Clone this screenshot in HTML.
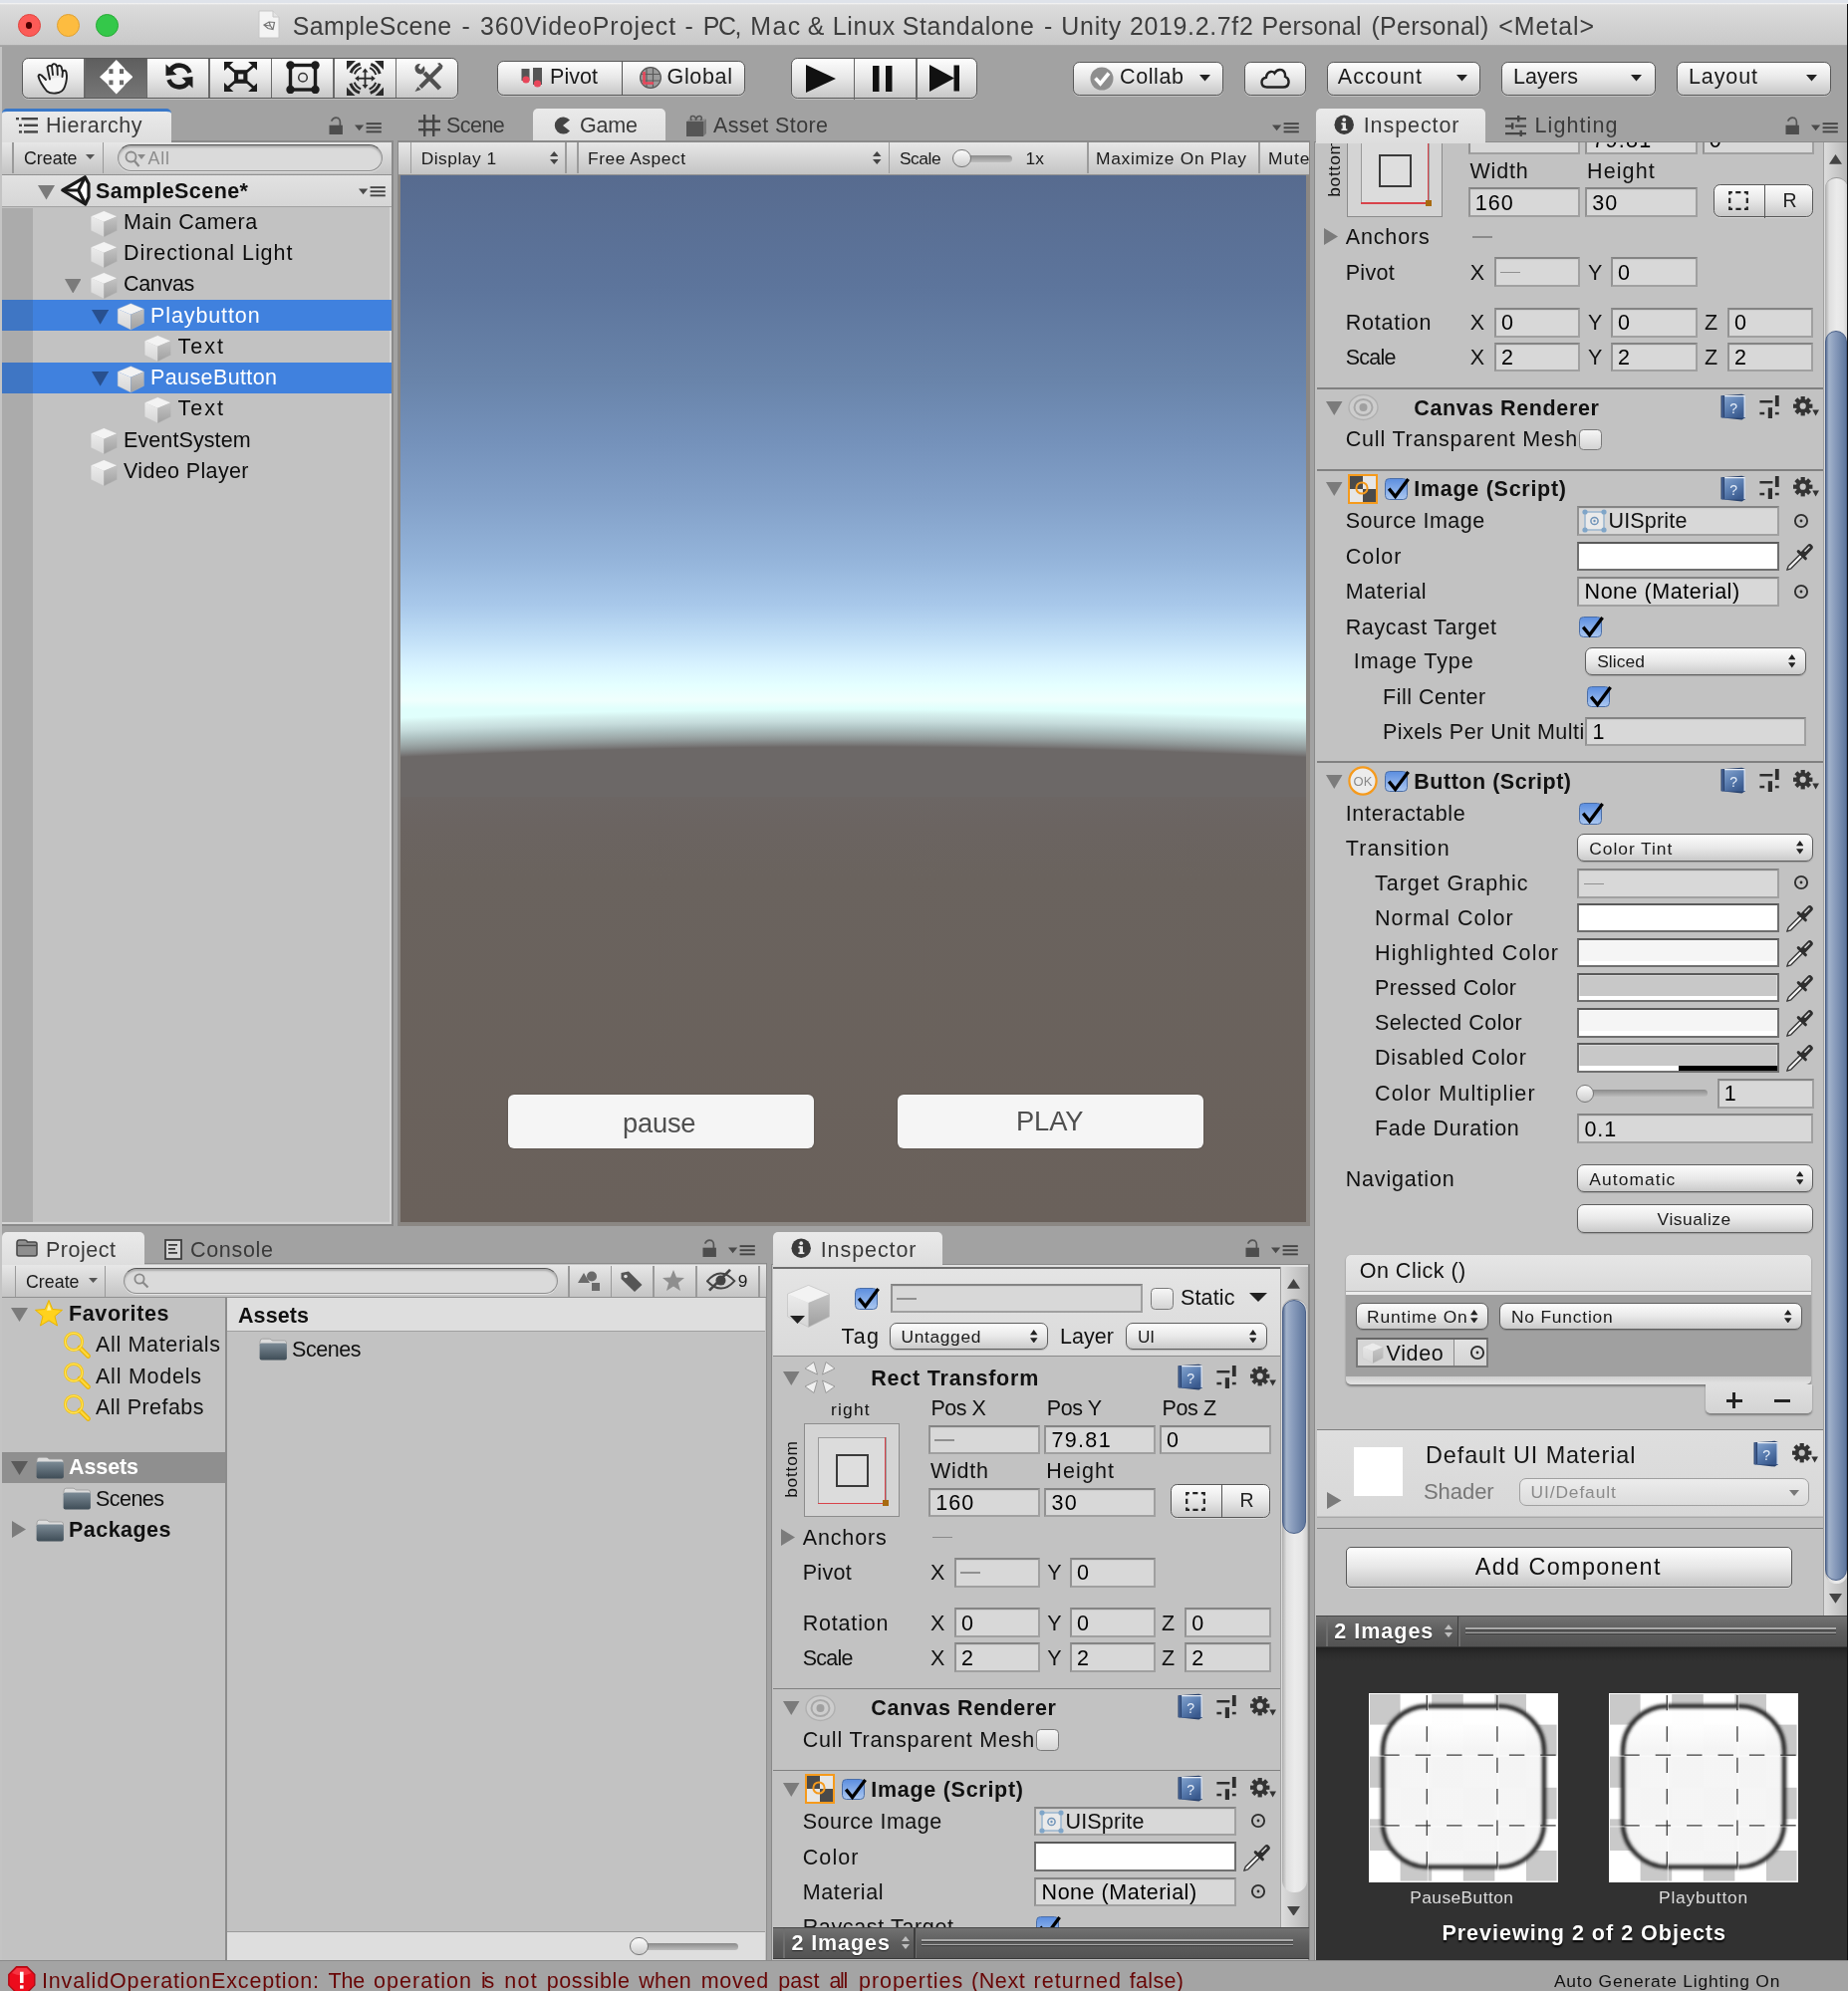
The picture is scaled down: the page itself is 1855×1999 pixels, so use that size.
<!DOCTYPE html>
<html><head><meta charset="utf-8"><title>Unity</title>
<style>

html,body{margin:0;padding:0;}
body{width:1855px;height:1999px;overflow:hidden;background:#a2a2a2;font-family:"Liberation Sans",sans-serif;}
#root{position:relative;width:1855px;height:1999px;overflow:hidden;background:#a2a2a2;opacity:0.9999;}
#root div,#root span,#root svg{position:absolute;box-sizing:border-box;}
.t{white-space:nowrap;line-height:40px;height:40px;}
.btn{background:linear-gradient(#fdfdfd,#e7e7e7 50%,#c7c7c7);border:1.8px solid #585858;border-radius:6.5px;box-shadow:0 1px 0 rgba(255,255,255,.35);}
.pop{background:linear-gradient(#fcfcfc,#e9e9e9 50%,#cacaca);border:1.8px solid #5e5e5e;border-radius:7px;box-shadow:0 1px 1px rgba(0,0,0,.18);}
.fld{background:#d8d8d8;border:2px solid #a0a0a0;border-top-color:#848484;border-left-color:#929292;box-shadow:inset 0 1px 1px rgba(0,0,0,.06);}
.tab{background:linear-gradient(#eaeaea,#dddddd);border-radius:5px 5px 0 0;}
.tbar{background:linear-gradient(#e7e7e7,#c4c4c4);border-bottom:1.5px solid #909090;}
.cb{background:linear-gradient(#f6f6f6,#d4d4d4);border:1.5px solid #7a7a7a;border-radius:4.5px;}
.cbc{background:linear-gradient(#5d8fe0,#a9c6f0);border:1.5px solid #4a6ea8;border-radius:4.5px;}
.sep{background:#808080;}

</style></head><body>
<div id="root">
<div style="left:1319.00px;top:141.50px;width:536.00px;height:1827.00px;background:#c2c2c2;border-left:1.9px solid #8a8a8a;border-top:1.5px solid #8a8a8a;"></div>
<div style="left:1321.50px;top:143.00px;width:508.50px;height:1479.00px;overflow:hidden;"><div style="left:-1321.50px;top:-143.00px;width:1855px;height:1999px;">
<div style="left:1321.00px;top:-32.00px;width:509.00px;height:88.80px;background:linear-gradient(#e4e4e4,#dadada);border-bottom:1.5px solid #8a8a8a;"></div>
<svg style="left:1331.50px;top:-20.00px;opacity:1;" width="49.00" height="49.00" viewBox="0 0 28 28" preserveAspectRatio="none"><defs><linearGradient id="cl" x1="0" y1="0" x2="0" y2="1"><stop offset="0" stop-color="#ececec"/><stop offset="1" stop-color="#d6d6d6"/></linearGradient><linearGradient id="cr" x1="0" y1="0" x2="0" y2="1"><stop offset="0" stop-color="#c4c4c4"/><stop offset="1" stop-color="#a0a0a0"/></linearGradient></defs><polygon points="14,2.5 26,7.5 14,12.5 2,7.5" fill="#f3f3f3"/><polygon points="2,7.5 14,12.5 14,26.5 2,20.5" fill="url(#cl)"/><polygon points="26,7.5 14,12.5 14,26.5 26,20.5" fill="url(#cr)"/><polygon points="14,2.5 26,7.5 26,20.5 14,26.5 2,20.5 2,7.5" fill="none" stroke="#bdbdbd" stroke-width="0.5" stroke-opacity="0.7"/></svg>
<svg style="left:1337.50px;top:15.50px;" width="15.00" height="8.00" viewBox="0 0 10 6" preserveAspectRatio="none"><polygon points="0,0 10,0 5,6" fill="#222"/></svg>
<div class="cbc" style="left:1403.00px;top:-13.00px;width:23.00px;height:22.00px;"></div>
<svg style="left:1403.00px;top:-15.00px;" width="27.00" height="25.00" viewBox="0 0 27 25" preserveAspectRatio="none"><path d="M4.2 12.6 L10.6 20.6 L23.6 3" fill="none" stroke="#000" stroke-width="3.3" stroke-linejoin="miter"/></svg>
<div class="fld" style="left:1438.50px;top:-17.00px;width:253.00px;height:29.80px;"></div>
<div style="left:1445.00px;top:-2.40px;width:20.00px;height:1.60px;background:#909090;"></div>
<div class="cb" style="left:1700.00px;top:-12.50px;width:23.00px;height:22.00px;"></div>
<span class="t" style="left:1730.00px;top:-22.75px;font-size:21.5px;color:#111;letter-spacing:0.144px;">Static</span>
<svg style="left:1798.50px;top:-8.00px;" width="18.00" height="9.00" viewBox="0 0 10 6" preserveAspectRatio="none"><polygon points="0,0 10,0 5,6" fill="#222"/></svg>
<span class="t" style="left:1389.50px;top:16.75px;font-size:21.5px;color:#111;letter-spacing:1.414px;">Tag</span>
<div class="pop" style="left:1437.60px;top:22.20px;width:159.40px;height:27.50px;"></div>
<span class="t" style="left:1449.60px;top:16.45px;font-size:17.4px;color:#1a1a1a;letter-spacing:0.625px;">Untagged</span>
<svg style="left:1579.25px;top:29.20px;" width="7.50" height="13.50" viewBox="0 0 8 14" preserveAspectRatio="none"><polygon points="4,0 8,5.5 0,5.5" fill="#222"/><polygon points="0,8.5 8,8.5 4,14" fill="#222"/></svg>
<span class="t" style="left:1609.00px;top:16.75px;font-size:21.5px;color:#111;letter-spacing:0.051px;">Layer</span>
<div class="pop" style="left:1675.00px;top:22.20px;width:141.50px;height:27.50px;"></div>
<span class="t" style="left:1687.00px;top:16.45px;font-size:17.2px;color:#1a1a1a;letter-spacing:-0.188px;">UI</span>
<svg style="left:1798.75px;top:29.20px;" width="7.50" height="13.50" viewBox="0 0 8 14" preserveAspectRatio="none"><polygon points="4,0 8,5.5 0,5.5" fill="#222"/><polygon points="0,8.5 8,8.5 4,14" fill="#222"/></svg>
<svg style="left:1331.25px;top:71.00px;" width="16.50" height="14.00" viewBox="0 0 10 8" preserveAspectRatio="none"><polygon points="0,0 10,0 5,8" fill="#7b7b7b"/></svg>
<svg style="left:1352.00px;top:61.50px;" width="32.00" height="32.00" viewBox="0 0 32 32" preserveAspectRatio="none"><g fill="#f0f0f0" stroke="#999" stroke-width="1"><polygon points="1,7 10,0.5 13.5,13"/><polygon points="31,7 22,0.5 18.5,13"/><polygon points="1,25 10,31.5 13.5,19"/><polygon points="31,25 22,31.5 18.5,19"/></g></svg>
<span class="t" style="left:1419.30px;top:58.05px;font-size:21.5px;font-weight:bold;color:#111;letter-spacing:0.791px;">Rect Transform</span>
<svg style="left:1727.20px;top:63.40px;" width="26.00" height="27.00" viewBox="0 0 26 27" preserveAspectRatio="none"><defs><linearGradient id="hb" x1="0" y1="0" x2="0.6" y2="1"><stop offset="0" stop-color="#86a5cf"/><stop offset="0.5" stop-color="#5d80b3"/><stop offset="1" stop-color="#3a5a8e"/></linearGradient></defs><path d="M0.5 2.2 L21.5 0.8 L24.8 2 L24.8 24.2 L21.5 26.6 L0.5 24.2 Z" fill="#27406b"/><rect x="4" y="2" width="20.6" height="22.6" fill="url(#hb)"/><path d="M4.3 2.6 H24.2 V24" fill="none" stroke="#e9eef6" stroke-width="1.3"/><path d="M2.2 2.4 V24.4" stroke="#4a6799" stroke-width="1.4"/><text x="13.2" y="19.6" font-family="Liberation Sans" font-size="14" fill="#e4ecf8" text-anchor="middle">?</text></svg>
<svg style="left:1766.30px;top:65.00px;" width="20.00" height="23.00" viewBox="0 0 20 23" preserveAspectRatio="none"><g fill="#2e2e2e"><rect x="0.4" y="5" width="13" height="2.5"/><rect x="15.9" y="0" width="3.8" height="11"/><rect x="0.4" y="16.8" width="4.8" height="2.5"/><rect x="8.8" y="12.2" width="4.2" height="10.8"/><rect x="15.9" y="16.8" width="3.8" height="2.5"/></g></svg>
<svg style="left:1800.00px;top:66.00px;" width="26.00" height="24.00" viewBox="0 0 26 24" preserveAspectRatio="none"><rect x="7.6" y="0" width="4.2" height="19.4" transform="rotate(0 9.7 9.7)" fill="#333"/><rect x="7.6" y="0" width="4.2" height="19.4" transform="rotate(45 9.7 9.7)" fill="#333"/><rect x="7.6" y="0" width="4.2" height="19.4" transform="rotate(90 9.7 9.7)" fill="#333"/><rect x="7.6" y="0" width="4.2" height="19.4" transform="rotate(135 9.7 9.7)" fill="#333"/><circle cx="9.7" cy="9.7" r="6.9" fill="#333"/><circle cx="9.7" cy="9.7" r="3.1" fill="#c6c6c6"/><polygon points="19.3,13.5 26,13.5 22.6,19.5" fill="#333"/></svg>
<span class="t" style="left:1379.00px;top:89.70px;font-size:17.4px;color:#111;letter-spacing:1.214px;">right</span>
<div style="left:1352.40px;top:123.50px;width:95.60px;height:94.20px;background:#d4d4d4;border:1.5px solid #8c8c8c;"></div>
<div style="left:1366.00px;top:137.00px;width:68.50px;height:67.50px;background:#dcdcdc;border:1.5px solid #9a9a9a;"></div>
<div style="left:1383.50px;top:154.50px;width:33.50px;height:33.00px;background:#dedede;border:2px solid #3a3a3a;"></div>
<div style="left:1432.70px;top:137.00px;width:1.80px;height:67.50px;background:#d8434a;"></div>
<div style="left:1366.00px;top:203.00px;width:68.00px;height:1.80px;background:#d8434a;"></div>
<div style="left:1430.50px;top:200.50px;width:6.00px;height:6.00px;background:#a86a10;"></div>
<div style="left:1329.00px;top:131.00px;width:20.00px;height:76.00px;"><span class="t" style="left:-29px;top:18px;width:78px;text-align:center;font-size:17.4px;letter-spacing:0.75px;color:#111;transform:rotate(-90deg);">bottom</span></div>
<span class="t" style="left:1476.00px;top:88.75px;font-size:21.5px;color:#111;letter-spacing:-0.469px;">Pos X</span>
<span class="t" style="left:1593.50px;top:88.75px;font-size:21.5px;color:#111;letter-spacing:-0.421px;">Pos Y</span>
<span class="t" style="left:1711.20px;top:88.75px;font-size:21.5px;color:#111;letter-spacing:-0.389px;">Pos Z</span>
<div class="fld" style="left:1473.50px;top:125.20px;width:112.70px;height:29.80px;"></div>
<div style="left:1480.00px;top:139.80px;width:20.00px;height:1.60px;background:#909090;"></div>
<div class="fld" style="left:1591.00px;top:125.20px;width:112.70px;height:29.80px;"></div>
<span class="t" style="left:1598.30px;top:120.65px;font-size:21.5px;color:#000;letter-spacing:1.297px;">79.81</span>
<div class="fld" style="left:1708.50px;top:125.20px;width:112.00px;height:29.80px;"></div>
<span class="t" style="left:1715.80px;top:120.65px;font-size:21.5px;color:#000;letter-spacing:-0.969px;">0</span>
<span class="t" style="left:1475.50px;top:151.75px;font-size:21.5px;color:#111;letter-spacing:0.783px;">Width</span>
<span class="t" style="left:1593.00px;top:151.75px;font-size:21.5px;color:#111;letter-spacing:1.109px;">Height</span>
<div class="fld" style="left:1473.50px;top:188.20px;width:112.70px;height:29.80px;"></div>
<span class="t" style="left:1480.80px;top:183.65px;font-size:21.5px;color:#000;letter-spacing:1.062px;">160</span>
<div class="fld" style="left:1591.00px;top:188.20px;width:112.70px;height:29.80px;"></div>
<span class="t" style="left:1598.30px;top:183.65px;font-size:21.5px;color:#000;letter-spacing:1.078px;">30</span>
<div class="btn" style="left:1719.70px;top:184.60px;width:100.80px;height:33.70px;"><div style="left:50px;top:0;width:1.5px;height:33px;background:#555;"></div></div>
<svg style="left:1735.00px;top:192.00px;" width="20.00" height="19.00" viewBox="0 0 20 19" preserveAspectRatio="none"><rect x="1.2" y="1.2" width="17.6" height="16.6" fill="none" stroke="#222" stroke-width="2.2" stroke-dasharray="5.2 3.4" stroke-dashoffset="2.6"/></svg>
<span class="t" style="left:1789.60px;top:180.82px;font-size:19.5px;color:#222;">R</span>
<svg style="left:1329.30px;top:229.00px;" width="14.00" height="17.00" viewBox="0 0 8 10" preserveAspectRatio="none"><polygon points="0,0 8,5 0,10" fill="#7b7b7b"/></svg>
<span class="t" style="left:1350.70px;top:218.05px;font-size:21.5px;color:#111;letter-spacing:0.871px;">Anchors</span>
<div style="left:1478.00px;top:237.00px;width:19.60px;height:1.60px;background:#8a8a8a;"></div>
<span class="t" style="left:1350.70px;top:253.75px;font-size:21.5px;color:#111;letter-spacing:0.297px;">Pivot</span>
<span class="t" style="left:1475.70px;top:253.75px;font-size:21.5px;color:#111;letter-spacing:-1.544px;">X</span>
<div class="fld" style="left:1499.70px;top:258.30px;width:86.50px;height:29.80px;"></div>
<div style="left:1506.20px;top:272.90px;width:20.00px;height:1.60px;background:#909090;"></div>
<span class="t" style="left:1594.00px;top:253.75px;font-size:21.5px;color:#111;letter-spacing:-2.344px;">Y</span>
<div class="fld" style="left:1616.60px;top:258.30px;width:87.10px;height:29.80px;"></div>
<span class="t" style="left:1623.90px;top:253.75px;font-size:21.5px;color:#000;letter-spacing:-0.969px;">0</span>
<span class="t" style="left:1350.70px;top:304.25px;font-size:21.5px;color:#111;letter-spacing:0.815px;">Rotation</span>
<span class="t" style="left:1475.70px;top:304.25px;font-size:21.5px;color:#111;letter-spacing:-1.544px;">X</span>
<div class="fld" style="left:1499.70px;top:308.80px;width:86.50px;height:29.80px;"></div>
<span class="t" style="left:1507.00px;top:304.25px;font-size:21.5px;color:#000;letter-spacing:-0.969px;">0</span>
<span class="t" style="left:1594.00px;top:304.25px;font-size:21.5px;color:#111;letter-spacing:-2.344px;">Y</span>
<div class="fld" style="left:1616.60px;top:308.80px;width:87.10px;height:29.80px;"></div>
<span class="t" style="left:1623.90px;top:304.25px;font-size:21.5px;color:#000;letter-spacing:-0.969px;">0</span>
<span class="t" style="left:1711.00px;top:304.25px;font-size:21.5px;color:#111;letter-spacing:-1.841px;">Z</span>
<div class="fld" style="left:1733.70px;top:308.80px;width:86.80px;height:29.80px;"></div>
<span class="t" style="left:1741.00px;top:304.25px;font-size:21.5px;color:#000;letter-spacing:-0.969px;">0</span>
<span class="t" style="left:1350.70px;top:339.05px;font-size:21.5px;color:#111;letter-spacing:-0.749px;">Scale</span>
<span class="t" style="left:1475.70px;top:339.05px;font-size:21.5px;color:#111;letter-spacing:-1.544px;">X</span>
<div class="fld" style="left:1499.70px;top:343.60px;width:86.50px;height:29.80px;"></div>
<span class="t" style="left:1507.00px;top:339.05px;font-size:21.5px;color:#000;letter-spacing:-0.969px;">2</span>
<span class="t" style="left:1594.00px;top:339.05px;font-size:21.5px;color:#111;letter-spacing:-2.344px;">Y</span>
<div class="fld" style="left:1616.60px;top:343.60px;width:87.10px;height:29.80px;"></div>
<span class="t" style="left:1623.90px;top:339.05px;font-size:21.5px;color:#000;letter-spacing:-0.969px;">2</span>
<span class="t" style="left:1711.00px;top:339.05px;font-size:21.5px;color:#111;letter-spacing:-1.841px;">Z</span>
<div class="fld" style="left:1733.70px;top:343.60px;width:86.80px;height:29.80px;"></div>
<span class="t" style="left:1741.00px;top:339.05px;font-size:21.5px;color:#000;letter-spacing:-0.969px;">2</span>
<div class="sep" style="left:1321.00px;top:389.00px;width:509.00px;height:1.60px;"></div>
<svg style="left:1331.25px;top:402.50px;" width="16.50" height="14.00" viewBox="0 0 10 8" preserveAspectRatio="none"><polygon points="0,0 10,0 5,8" fill="#7b7b7b"/></svg>
<svg style="left:1353.00px;top:395.00px;" width="31.00" height="28.00" viewBox="0 0 31 28" preserveAspectRatio="none"><ellipse cx="15.5" cy="14" rx="14.5" ry="12.5" fill="#cdcdcd" stroke="#b0b0b0" stroke-width="1.4"/><ellipse cx="15.5" cy="14" rx="9" ry="8" fill="none" stroke="#a8a8a8" stroke-width="2"/><circle cx="15.5" cy="14" r="4" fill="#a0a0a0"/></svg>
<span class="t" style="left:1419.30px;top:389.55px;font-size:21.5px;font-weight:bold;color:#111;letter-spacing:0.623px;">Canvas Renderer</span>
<svg style="left:1727.20px;top:394.90px;" width="26.00" height="27.00" viewBox="0 0 26 27" preserveAspectRatio="none"><defs><linearGradient id="hb" x1="0" y1="0" x2="0.6" y2="1"><stop offset="0" stop-color="#86a5cf"/><stop offset="0.5" stop-color="#5d80b3"/><stop offset="1" stop-color="#3a5a8e"/></linearGradient></defs><path d="M0.5 2.2 L21.5 0.8 L24.8 2 L24.8 24.2 L21.5 26.6 L0.5 24.2 Z" fill="#27406b"/><rect x="4" y="2" width="20.6" height="22.6" fill="url(#hb)"/><path d="M4.3 2.6 H24.2 V24" fill="none" stroke="#e9eef6" stroke-width="1.3"/><path d="M2.2 2.4 V24.4" stroke="#4a6799" stroke-width="1.4"/><text x="13.2" y="19.6" font-family="Liberation Sans" font-size="14" fill="#e4ecf8" text-anchor="middle">?</text></svg>
<svg style="left:1766.30px;top:396.50px;" width="20.00" height="23.00" viewBox="0 0 20 23" preserveAspectRatio="none"><g fill="#2e2e2e"><rect x="0.4" y="5" width="13" height="2.5"/><rect x="15.9" y="0" width="3.8" height="11"/><rect x="0.4" y="16.8" width="4.8" height="2.5"/><rect x="8.8" y="12.2" width="4.2" height="10.8"/><rect x="15.9" y="16.8" width="3.8" height="2.5"/></g></svg>
<svg style="left:1800.00px;top:397.50px;" width="26.00" height="24.00" viewBox="0 0 26 24" preserveAspectRatio="none"><rect x="7.6" y="0" width="4.2" height="19.4" transform="rotate(0 9.7 9.7)" fill="#333"/><rect x="7.6" y="0" width="4.2" height="19.4" transform="rotate(45 9.7 9.7)" fill="#333"/><rect x="7.6" y="0" width="4.2" height="19.4" transform="rotate(90 9.7 9.7)" fill="#333"/><rect x="7.6" y="0" width="4.2" height="19.4" transform="rotate(135 9.7 9.7)" fill="#333"/><circle cx="9.7" cy="9.7" r="6.9" fill="#333"/><circle cx="9.7" cy="9.7" r="3.1" fill="#c6c6c6"/><polygon points="19.3,13.5 26,13.5 22.6,19.5" fill="#333"/></svg>
<span class="t" style="left:1350.70px;top:421.15px;font-size:21.5px;color:#111;letter-spacing:0.815px;">Cull Transparent Mesh</span>
<div class="cb" style="left:1585.30px;top:430.50px;width:22.50px;height:21.50px;"></div>
<div class="sep" style="left:1321.00px;top:471.00px;width:509.00px;height:1.60px;"></div>
<svg style="left:1331.25px;top:484.20px;" width="16.50" height="14.00" viewBox="0 0 10 8" preserveAspectRatio="none"><polygon points="0,0 10,0 5,8" fill="#7b7b7b"/></svg>
<svg style="left:1353.00px;top:475.70px;" width="30.00" height="30.00" viewBox="0 0 30 30" preserveAspectRatio="none"><rect x="1" y="1" width="28" height="28" fill="#e6e6e6"/><rect x="1" y="1" width="14" height="14" fill="#4a4a4a"/><rect x="15" y="15" width="14" height="14" fill="#4a4a4a"/><rect x="1" y="1" width="28" height="28" fill="none" stroke="#f59a1c" stroke-width="2"/><circle cx="14" cy="14" r="5.6" fill="none" stroke="#f59a1c" stroke-width="2"/></svg>
<div class="cbc" style="left:1389.70px;top:480.00px;width:23.00px;height:21.50px;"></div>
<svg style="left:1389.70px;top:478.00px;" width="27.00" height="25.00" viewBox="0 0 27 25" preserveAspectRatio="none"><path d="M4.2 12.6 L10.6 20.6 L23.6 3" fill="none" stroke="#000" stroke-width="3.3" stroke-linejoin="miter"/></svg>
<span class="t" style="left:1419.30px;top:471.25px;font-size:21.5px;font-weight:bold;color:#111;letter-spacing:0.717px;">Image (Script)</span>
<svg style="left:1727.20px;top:476.60px;" width="26.00" height="27.00" viewBox="0 0 26 27" preserveAspectRatio="none"><defs><linearGradient id="hb" x1="0" y1="0" x2="0.6" y2="1"><stop offset="0" stop-color="#86a5cf"/><stop offset="0.5" stop-color="#5d80b3"/><stop offset="1" stop-color="#3a5a8e"/></linearGradient></defs><path d="M0.5 2.2 L21.5 0.8 L24.8 2 L24.8 24.2 L21.5 26.6 L0.5 24.2 Z" fill="#27406b"/><rect x="4" y="2" width="20.6" height="22.6" fill="url(#hb)"/><path d="M4.3 2.6 H24.2 V24" fill="none" stroke="#e9eef6" stroke-width="1.3"/><path d="M2.2 2.4 V24.4" stroke="#4a6799" stroke-width="1.4"/><text x="13.2" y="19.6" font-family="Liberation Sans" font-size="14" fill="#e4ecf8" text-anchor="middle">?</text></svg>
<svg style="left:1766.30px;top:478.20px;" width="20.00" height="23.00" viewBox="0 0 20 23" preserveAspectRatio="none"><g fill="#2e2e2e"><rect x="0.4" y="5" width="13" height="2.5"/><rect x="15.9" y="0" width="3.8" height="11"/><rect x="0.4" y="16.8" width="4.8" height="2.5"/><rect x="8.8" y="12.2" width="4.2" height="10.8"/><rect x="15.9" y="16.8" width="3.8" height="2.5"/></g></svg>
<svg style="left:1800.00px;top:479.20px;" width="26.00" height="24.00" viewBox="0 0 26 24" preserveAspectRatio="none"><rect x="7.6" y="0" width="4.2" height="19.4" transform="rotate(0 9.7 9.7)" fill="#333"/><rect x="7.6" y="0" width="4.2" height="19.4" transform="rotate(45 9.7 9.7)" fill="#333"/><rect x="7.6" y="0" width="4.2" height="19.4" transform="rotate(90 9.7 9.7)" fill="#333"/><rect x="7.6" y="0" width="4.2" height="19.4" transform="rotate(135 9.7 9.7)" fill="#333"/><circle cx="9.7" cy="9.7" r="6.9" fill="#333"/><circle cx="9.7" cy="9.7" r="3.1" fill="#c6c6c6"/><polygon points="19.3,13.5 26,13.5 22.6,19.5" fill="#333"/></svg>
<span class="t" style="left:1350.70px;top:503.25px;font-size:21.5px;color:#111;letter-spacing:0.522px;">Source Image</span>
<div class="fld" style="left:1583.30px;top:508.20px;width:202.70px;height:29.80px;"></div>
<svg style="left:1588.00px;top:511.00px;" width="25.00" height="24.00" viewBox="0 0 25 24" preserveAspectRatio="none"><rect x="3" y="3" width="19" height="18" fill="#eaeaea" stroke="#9fb8d0" stroke-width="1.6"/><g fill="#7fa5c8"><circle cx="3" cy="3" r="2.6"/><circle cx="22" cy="3" r="2.6"/><circle cx="3" cy="21" r="2.6"/><circle cx="22" cy="21" r="2.6"/></g><circle cx="12.5" cy="12" r="3.6" fill="none" stroke="#6f93b8" stroke-width="1.5"/><circle cx="12.5" cy="12" r="1.2" fill="#6f93b8"/></svg>
<span class="t" style="left:1614.50px;top:503.25px;font-size:21.5px;color:#111;letter-spacing:0.175px;">UISprite</span>
<svg style="left:1800.40px;top:514.80px;" width="16.00" height="16.00" viewBox="0 0 16 16" preserveAspectRatio="none"><circle cx="8" cy="8" r="6.1" fill="none" stroke="#2e2e2e" stroke-width="1.9"/><circle cx="8" cy="8" r="1.4" fill="#2e2e2e"/></svg>
<span class="t" style="left:1350.70px;top:539.05px;font-size:21.5px;color:#111;letter-spacing:1.102px;">Color</span>
<div style="left:1583.30px;top:543.60px;width:202.70px;height:29.80px;background:#fff;border:2px solid #6f6f6f;border-top-color:#5a5a5a;box-shadow:inset 0 0 0 1px rgba(255,255,255,.35);"></div>
<div style="left:1585.30px;top:567.00px;width:198.70px;height:4.40px;background:#fff;"></div>
<svg style="left:1792.50px;top:545.00px;" width="27.00" height="28.00" viewBox="0 0 27 28" preserveAspectRatio="none"><path d="M0.8 27.2 L2.2 23.2 L14.2 11.2 L16.8 13.8 L4.8 25.8 Z" fill="#f4f4f4" stroke="#3a3a3a" stroke-width="1.4" stroke-linejoin="round"/><path d="M12.2 8.6 L19.4 15.8" stroke="#2e2e2e" stroke-width="3" stroke-linecap="round"/><path d="M17.4 10.8 L23.6 4.4" stroke="#2e2e2e" stroke-width="6.2" stroke-linecap="round"/><path d="M19 8.2 L23 4.2" stroke="#d8d8d8" stroke-width="1.6" stroke-linecap="round"/></svg>
<span class="t" style="left:1350.70px;top:574.05px;font-size:21.5px;color:#111;letter-spacing:0.619px;">Material</span>
<div class="fld" style="left:1583.30px;top:579.00px;width:202.70px;height:29.80px;"></div>
<span class="t" style="left:1590.60px;top:574.45px;font-size:21.5px;color:#000;letter-spacing:0.523px;">None (Material)</span>
<svg style="left:1800.40px;top:585.50px;" width="16.00" height="16.00" viewBox="0 0 16 16" preserveAspectRatio="none"><circle cx="8" cy="8" r="6.1" fill="none" stroke="#2e2e2e" stroke-width="1.9"/><circle cx="8" cy="8" r="1.4" fill="#2e2e2e"/></svg>
<span class="t" style="left:1350.70px;top:609.55px;font-size:21.5px;color:#111;letter-spacing:0.637px;">Raycast Target</span>
<div class="cbc" style="left:1585.30px;top:618.50px;width:22.50px;height:21.50px;"></div>
<svg style="left:1585.30px;top:616.50px;" width="27.00" height="25.00" viewBox="0 0 27 25" preserveAspectRatio="none"><path d="M4.2 12.6 L10.6 20.6 L23.6 3" fill="none" stroke="#000" stroke-width="3.3" stroke-linejoin="miter"/></svg>
<span class="t" style="left:1358.80px;top:644.25px;font-size:21.5px;color:#111;letter-spacing:0.872px;">Image Type</span>
<div class="pop" style="left:1591.20px;top:650.00px;width:221.50px;height:27.50px;"></div>
<span class="t" style="left:1603.20px;top:644.25px;font-size:17.4px;color:#1a1a1a;letter-spacing:0.065px;">Sliced</span>
<svg style="left:1794.95px;top:657.00px;" width="7.50" height="13.50" viewBox="0 0 8 14" preserveAspectRatio="none"><polygon points="4,0 8,5.5 0,5.5" fill="#222"/><polygon points="0,8.5 8,8.5 4,14" fill="#222"/></svg>
<span class="t" style="left:1388.00px;top:679.55px;font-size:21.5px;color:#111;letter-spacing:0.523px;">Fill Center</span>
<div class="cbc" style="left:1593.20px;top:688.50px;width:22.50px;height:21.50px;"></div>
<svg style="left:1593.20px;top:686.50px;" width="27.00" height="25.00" viewBox="0 0 27 25" preserveAspectRatio="none"><path d="M4.2 12.6 L10.6 20.6 L23.6 3" fill="none" stroke="#000" stroke-width="3.3" stroke-linejoin="miter"/></svg>
<span class="t" style="left:1388.00px;top:714.55px;font-size:21.5px;color:#111;letter-spacing:0.497px;">Pixels Per Unit Multi</span>
<div class="fld" style="left:1591.20px;top:719.60px;width:221.50px;height:29.80px;"></div>
<span class="t" style="left:1598.50px;top:715.05px;font-size:21.5px;color:#000;letter-spacing:-1.969px;">1</span>
<div class="sep" style="left:1321.00px;top:764.30px;width:509.00px;height:1.60px;"></div>
<svg style="left:1331.25px;top:777.90px;" width="16.50" height="14.00" viewBox="0 0 10 8" preserveAspectRatio="none"><polygon points="0,0 10,0 5,8" fill="#7b7b7b"/></svg>
<svg style="left:1353.00px;top:769.40px;" width="30.00" height="30.00" viewBox="0 0 30 30" preserveAspectRatio="none"><circle cx="15" cy="15" r="13.6" fill="#ececec" stroke="#f59a1c" stroke-width="2.2"/><text x="15" y="20" font-family="Liberation Sans" font-size="13" fill="#8a8a8a" text-anchor="middle">OK</text></svg>
<div class="cbc" style="left:1389.70px;top:773.70px;width:23.00px;height:21.50px;"></div>
<svg style="left:1389.70px;top:771.70px;" width="27.00" height="25.00" viewBox="0 0 27 25" preserveAspectRatio="none"><path d="M4.2 12.6 L10.6 20.6 L23.6 3" fill="none" stroke="#000" stroke-width="3.3" stroke-linejoin="miter"/></svg>
<span class="t" style="left:1419.30px;top:764.95px;font-size:21.5px;font-weight:bold;color:#111;letter-spacing:0.517px;">Button (Script)</span>
<svg style="left:1727.20px;top:770.30px;" width="26.00" height="27.00" viewBox="0 0 26 27" preserveAspectRatio="none"><defs><linearGradient id="hb" x1="0" y1="0" x2="0.6" y2="1"><stop offset="0" stop-color="#86a5cf"/><stop offset="0.5" stop-color="#5d80b3"/><stop offset="1" stop-color="#3a5a8e"/></linearGradient></defs><path d="M0.5 2.2 L21.5 0.8 L24.8 2 L24.8 24.2 L21.5 26.6 L0.5 24.2 Z" fill="#27406b"/><rect x="4" y="2" width="20.6" height="22.6" fill="url(#hb)"/><path d="M4.3 2.6 H24.2 V24" fill="none" stroke="#e9eef6" stroke-width="1.3"/><path d="M2.2 2.4 V24.4" stroke="#4a6799" stroke-width="1.4"/><text x="13.2" y="19.6" font-family="Liberation Sans" font-size="14" fill="#e4ecf8" text-anchor="middle">?</text></svg>
<svg style="left:1766.30px;top:771.90px;" width="20.00" height="23.00" viewBox="0 0 20 23" preserveAspectRatio="none"><g fill="#2e2e2e"><rect x="0.4" y="5" width="13" height="2.5"/><rect x="15.9" y="0" width="3.8" height="11"/><rect x="0.4" y="16.8" width="4.8" height="2.5"/><rect x="8.8" y="12.2" width="4.2" height="10.8"/><rect x="15.9" y="16.8" width="3.8" height="2.5"/></g></svg>
<svg style="left:1800.00px;top:772.90px;" width="26.00" height="24.00" viewBox="0 0 26 24" preserveAspectRatio="none"><rect x="7.6" y="0" width="4.2" height="19.4" transform="rotate(0 9.7 9.7)" fill="#333"/><rect x="7.6" y="0" width="4.2" height="19.4" transform="rotate(45 9.7 9.7)" fill="#333"/><rect x="7.6" y="0" width="4.2" height="19.4" transform="rotate(90 9.7 9.7)" fill="#333"/><rect x="7.6" y="0" width="4.2" height="19.4" transform="rotate(135 9.7 9.7)" fill="#333"/><circle cx="9.7" cy="9.7" r="6.9" fill="#333"/><circle cx="9.7" cy="9.7" r="3.1" fill="#c6c6c6"/><polygon points="19.3,13.5 26,13.5 22.6,19.5" fill="#333"/></svg>
<span class="t" style="left:1350.70px;top:796.85px;font-size:21.5px;color:#111;letter-spacing:0.704px;">Interactable</span>
<div class="cbc" style="left:1585.30px;top:806.00px;width:22.50px;height:21.50px;"></div>
<svg style="left:1585.30px;top:804.00px;" width="27.00" height="25.00" viewBox="0 0 27 25" preserveAspectRatio="none"><path d="M4.2 12.6 L10.6 20.6 L23.6 3" fill="none" stroke="#000" stroke-width="3.3" stroke-linejoin="miter"/></svg>
<span class="t" style="left:1350.70px;top:831.95px;font-size:21.5px;color:#111;letter-spacing:1.155px;">Transition</span>
<div class="pop" style="left:1583.30px;top:837.30px;width:237.20px;height:27.50px;"></div>
<span class="t" style="left:1595.30px;top:831.55px;font-size:17.4px;color:#1a1a1a;letter-spacing:0.953px;">Color Tint</span>
<svg style="left:1802.75px;top:844.30px;" width="7.50" height="13.50" viewBox="0 0 8 14" preserveAspectRatio="none"><polygon points="4,0 8,5.5 0,5.5" fill="#222"/><polygon points="0,8.5 8,8.5 4,14" fill="#222"/></svg>
<span class="t" style="left:1380.00px;top:866.95px;font-size:21.5px;color:#111;letter-spacing:0.968px;">Target Graphic</span>
<div class="fld" style="left:1583.30px;top:872.20px;width:202.70px;height:29.80px;"></div>
<div style="left:1589.80px;top:886.80px;width:20.00px;height:1.60px;background:#909090;"></div>
<svg style="left:1800.40px;top:878.40px;" width="16.00" height="16.00" viewBox="0 0 16 16" preserveAspectRatio="none"><circle cx="8" cy="8" r="6.1" fill="none" stroke="#2e2e2e" stroke-width="1.9"/><circle cx="8" cy="8" r="1.4" fill="#2e2e2e"/></svg>
<span class="t" style="left:1380.00px;top:902.05px;font-size:21.5px;color:#111;letter-spacing:1.096px;">Normal Color</span>
<div style="left:1583.30px;top:906.60px;width:202.70px;height:29.80px;background:#fff;border:2px solid #6f6f6f;border-top-color:#5a5a5a;box-shadow:inset 0 0 0 1px rgba(255,255,255,.35);"></div>
<div style="left:1585.30px;top:930.00px;width:198.70px;height:4.40px;background:#fff;"></div>
<svg style="left:1792.50px;top:908.00px;" width="27.00" height="28.00" viewBox="0 0 27 28" preserveAspectRatio="none"><path d="M0.8 27.2 L2.2 23.2 L14.2 11.2 L16.8 13.8 L4.8 25.8 Z" fill="#f4f4f4" stroke="#3a3a3a" stroke-width="1.4" stroke-linejoin="round"/><path d="M12.2 8.6 L19.4 15.8" stroke="#2e2e2e" stroke-width="3" stroke-linecap="round"/><path d="M17.4 10.8 L23.6 4.4" stroke="#2e2e2e" stroke-width="6.2" stroke-linecap="round"/><path d="M19 8.2 L23 4.2" stroke="#d8d8d8" stroke-width="1.6" stroke-linecap="round"/></svg>
<span class="t" style="left:1380.00px;top:937.15px;font-size:21.5px;color:#111;letter-spacing:1.191px;">Highlighted Color</span>
<div style="left:1583.30px;top:941.70px;width:202.70px;height:29.80px;background:#f5f5f5;border:2px solid #6f6f6f;border-top-color:#5a5a5a;box-shadow:inset 0 0 0 1px rgba(255,255,255,.35);"></div>
<div style="left:1585.30px;top:965.10px;width:198.70px;height:4.40px;background:#fff;"></div>
<svg style="left:1792.50px;top:943.10px;" width="27.00" height="28.00" viewBox="0 0 27 28" preserveAspectRatio="none"><path d="M0.8 27.2 L2.2 23.2 L14.2 11.2 L16.8 13.8 L4.8 25.8 Z" fill="#f4f4f4" stroke="#3a3a3a" stroke-width="1.4" stroke-linejoin="round"/><path d="M12.2 8.6 L19.4 15.8" stroke="#2e2e2e" stroke-width="3" stroke-linecap="round"/><path d="M17.4 10.8 L23.6 4.4" stroke="#2e2e2e" stroke-width="6.2" stroke-linecap="round"/><path d="M19 8.2 L23 4.2" stroke="#d8d8d8" stroke-width="1.6" stroke-linecap="round"/></svg>
<span class="t" style="left:1380.00px;top:972.15px;font-size:21.5px;color:#111;letter-spacing:0.480px;">Pressed Color</span>
<div style="left:1583.30px;top:976.70px;width:202.70px;height:29.80px;background:#c8c8c8;border:2px solid #6f6f6f;border-top-color:#5a5a5a;box-shadow:inset 0 0 0 1px rgba(255,255,255,.35);"></div>
<div style="left:1585.30px;top:1000.10px;width:198.70px;height:4.40px;background:#fff;"></div>
<svg style="left:1792.50px;top:978.10px;" width="27.00" height="28.00" viewBox="0 0 27 28" preserveAspectRatio="none"><path d="M0.8 27.2 L2.2 23.2 L14.2 11.2 L16.8 13.8 L4.8 25.8 Z" fill="#f4f4f4" stroke="#3a3a3a" stroke-width="1.4" stroke-linejoin="round"/><path d="M12.2 8.6 L19.4 15.8" stroke="#2e2e2e" stroke-width="3" stroke-linecap="round"/><path d="M17.4 10.8 L23.6 4.4" stroke="#2e2e2e" stroke-width="6.2" stroke-linecap="round"/><path d="M19 8.2 L23 4.2" stroke="#d8d8d8" stroke-width="1.6" stroke-linecap="round"/></svg>
<span class="t" style="left:1380.00px;top:1007.25px;font-size:21.5px;color:#111;letter-spacing:0.513px;">Selected Color</span>
<div style="left:1583.30px;top:1011.80px;width:202.70px;height:29.80px;background:#f5f5f5;border:2px solid #6f6f6f;border-top-color:#5a5a5a;box-shadow:inset 0 0 0 1px rgba(255,255,255,.35);"></div>
<div style="left:1585.30px;top:1035.20px;width:198.70px;height:4.40px;background:#fff;"></div>
<svg style="left:1792.50px;top:1013.20px;" width="27.00" height="28.00" viewBox="0 0 27 28" preserveAspectRatio="none"><path d="M0.8 27.2 L2.2 23.2 L14.2 11.2 L16.8 13.8 L4.8 25.8 Z" fill="#f4f4f4" stroke="#3a3a3a" stroke-width="1.4" stroke-linejoin="round"/><path d="M12.2 8.6 L19.4 15.8" stroke="#2e2e2e" stroke-width="3" stroke-linecap="round"/><path d="M17.4 10.8 L23.6 4.4" stroke="#2e2e2e" stroke-width="6.2" stroke-linecap="round"/><path d="M19 8.2 L23 4.2" stroke="#d8d8d8" stroke-width="1.6" stroke-linecap="round"/></svg>
<span class="t" style="left:1380.00px;top:1042.35px;font-size:21.5px;color:#111;letter-spacing:0.830px;">Disabled Color</span>
<div style="left:1583.30px;top:1046.90px;width:202.70px;height:29.80px;background:#c8c8c8;border:2px solid #6f6f6f;border-top-color:#5a5a5a;box-shadow:inset 0 0 0 1px rgba(255,255,255,.35);"></div>
<div style="left:1585.30px;top:1070.30px;width:99.35px;height:4.40px;background:#fff;"></div>
<div style="left:1684.65px;top:1070.30px;width:99.35px;height:4.40px;background:#000;"></div>
<svg style="left:1792.50px;top:1048.30px;" width="27.00" height="28.00" viewBox="0 0 27 28" preserveAspectRatio="none"><path d="M0.8 27.2 L2.2 23.2 L14.2 11.2 L16.8 13.8 L4.8 25.8 Z" fill="#f4f4f4" stroke="#3a3a3a" stroke-width="1.4" stroke-linejoin="round"/><path d="M12.2 8.6 L19.4 15.8" stroke="#2e2e2e" stroke-width="3" stroke-linecap="round"/><path d="M17.4 10.8 L23.6 4.4" stroke="#2e2e2e" stroke-width="6.2" stroke-linecap="round"/><path d="M19 8.2 L23 4.2" stroke="#d8d8d8" stroke-width="1.6" stroke-linecap="round"/></svg>
<span class="t" style="left:1380.00px;top:1077.95px;font-size:21.5px;color:#111;letter-spacing:1.148px;">Color Multiplier</span>
<div style="left:1590.00px;top:1094.00px;width:124.00px;height:7.00px;background:linear-gradient(#8a8a8a,#bcbcbc);border-radius:4px;"></div>
<div style="left:1581.50px;top:1088.50px;width:18.00px;height:18.00px;background:linear-gradient(#fbfbfb,#cdcdcd);border:1.5px solid #777;border-radius:50%;"></div>
<div class="fld" style="left:1723.50px;top:1083.00px;width:97.00px;height:29.80px;"></div>
<span class="t" style="left:1730.80px;top:1078.45px;font-size:21.5px;color:#000;letter-spacing:-1.969px;">1</span>
<span class="t" style="left:1380.00px;top:1113.05px;font-size:21.5px;color:#111;letter-spacing:0.712px;">Fade Duration</span>
<div class="fld" style="left:1583.30px;top:1118.20px;width:237.20px;height:29.80px;"></div>
<span class="t" style="left:1590.60px;top:1113.65px;font-size:21.5px;color:#000;letter-spacing:0.805px;">0.1</span>
<span class="t" style="left:1350.70px;top:1163.75px;font-size:21.5px;color:#111;letter-spacing:0.823px;">Navigation</span>
<div class="pop" style="left:1583.30px;top:1169.30px;width:237.20px;height:27.50px;"></div>
<span class="t" style="left:1595.30px;top:1163.55px;font-size:17.4px;color:#1a1a1a;letter-spacing:1.084px;">Automatic</span>
<svg style="left:1802.75px;top:1176.30px;" width="7.50" height="13.50" viewBox="0 0 8 14" preserveAspectRatio="none"><polygon points="4,0 8,5.5 0,5.5" fill="#222"/><polygon points="0,8.5 8,8.5 4,14" fill="#222"/></svg>
<div class="pop" style="left:1583.30px;top:1208.70px;width:237.20px;height:29.20px;"></div>
<span class="t" style="left:1663.60px;top:1203.70px;font-size:17.4px;color:#1a1a1a;letter-spacing:0.550px;">Visualize</span>
<div style="left:1350.70px;top:1259.80px;width:467.80px;height:130.00px;background:#a0a0a0;border-radius:5px;box-shadow:0 1.5px 2px rgba(0,0,0,.35);"></div>
<div style="left:1350.70px;top:1259.80px;width:467.80px;height:36.50px;background:linear-gradient(#e6e6e6,#dadada);border-radius:5px 5px 0 0;"></div>
<div style="left:1350.70px;top:1295.80px;width:467.80px;height:1.20px;background:#a6a6a6;"></div>
<div style="left:1350.70px;top:1297.00px;width:467.80px;height:3.30px;background:#ececec;"></div>
<div style="left:1350.70px;top:1382.00px;width:467.80px;height:8.00px;background:linear-gradient(#cfcfcf,#e4e4e4);border-radius:0 0 5px 5px;"></div>
<span class="t" style="left:1364.70px;top:1256.45px;font-size:21.5px;color:#111;letter-spacing:0.507px;">On Click ()</span>
<div class="pop" style="left:1360.90px;top:1308.00px;width:133.10px;height:27.20px;"></div>
<span class="t" style="left:1372.00px;top:1302.10px;font-size:17.4px;color:#1a1a1a;letter-spacing:0.889px;">Runtime On</span>
<svg style="left:1476.25px;top:1314.85px;" width="7.50" height="13.50" viewBox="0 0 8 14" preserveAspectRatio="none"><polygon points="4,0 8,5.5 0,5.5" fill="#222"/><polygon points="0,8.5 8,8.5 4,14" fill="#222"/></svg>
<div class="pop" style="left:1505.00px;top:1308.00px;width:303.90px;height:27.20px;"></div>
<span class="t" style="left:1517.00px;top:1302.10px;font-size:17.4px;color:#1a1a1a;letter-spacing:0.793px;">No Function</span>
<svg style="left:1791.15px;top:1314.85px;" width="7.50" height="13.50" viewBox="0 0 8 14" preserveAspectRatio="none"><polygon points="4,0 8,5.5 0,5.5" fill="#222"/><polygon points="0,8.5 8,8.5 4,14" fill="#222"/></svg>
<div style="left:1360.90px;top:1343.00px;width:133.10px;height:30.40px;background:#d6d6d6;border:2px solid #787878;border-top-color:#666;"></div>
<div style="left:1458.80px;top:1345.00px;width:33.20px;height:26.40px;background:linear-gradient(#e2e2e2,#d4d4d4);border-left:1.5px solid #8c8c8c;"></div>
<svg style="left:1365.50px;top:1346.00px;opacity:0.75;" width="24.00" height="24.00" viewBox="0 0 28 28" preserveAspectRatio="none"><defs><linearGradient id="cl" x1="0" y1="0" x2="0" y2="1"><stop offset="0" stop-color="#ececec"/><stop offset="1" stop-color="#d6d6d6"/></linearGradient><linearGradient id="cr" x1="0" y1="0" x2="0" y2="1"><stop offset="0" stop-color="#c4c4c4"/><stop offset="1" stop-color="#a0a0a0"/></linearGradient></defs><polygon points="14,2.5 26,7.5 14,12.5 2,7.5" fill="#f3f3f3"/><polygon points="2,7.5 14,12.5 14,26.5 2,20.5" fill="url(#cl)"/><polygon points="26,7.5 14,12.5 14,26.5 26,20.5" fill="url(#cr)"/><polygon points="14,2.5 26,7.5 26,20.5 14,26.5 2,20.5 2,7.5" fill="none" stroke="#bdbdbd" stroke-width="0.5" stroke-opacity="0.7"/></svg>
<span class="t" style="left:1391.60px;top:1338.55px;font-size:21.5px;color:#111;letter-spacing:0.648px;">Video</span>
<svg style="left:1474.90px;top:1349.50px;" width="16.00" height="16.00" viewBox="0 0 16 16" preserveAspectRatio="none"><circle cx="8" cy="8" r="6.1" fill="none" stroke="#2e2e2e" stroke-width="1.9"/><circle cx="8" cy="8" r="1.4" fill="#2e2e2e"/></svg>
<div style="left:1711.50px;top:1389.90px;width:107.00px;height:29.50px;background:linear-gradient(#e0e0e0,#d4d4d4);border-radius:0 0 5px 5px;box-shadow:0 1.5px 2px rgba(0,0,0,.35);"></div>
<div style="left:1732.50px;top:1404.60px;width:16.00px;height:3.00px;background:#222;"></div>
<div style="left:1739.00px;top:1398.00px;width:3.00px;height:16.00px;background:#222;"></div>
<div style="left:1781.00px;top:1404.60px;width:16.00px;height:3.00px;background:#222;"></div>
<div class="sep" style="left:1321.00px;top:1434.50px;width:509.00px;height:1.60px;"></div>
<div style="left:1321.00px;top:1436.20px;width:509.00px;height:86.30px;background:linear-gradient(#dedede,#d8d8d8);"></div>
<div style="left:1321.00px;top:1522.50px;width:509.00px;height:1.50px;background:#a8a8a8;"></div>
<div style="left:1359.40px;top:1453.00px;width:48.60px;height:48.60px;background:#fff;"></div>
<svg style="left:1332.25px;top:1497.50px;" width="14.50" height="17.00" viewBox="0 0 8 10" preserveAspectRatio="none"><polygon points="0,0 8,5 0,10" fill="#7b7b7b"/></svg>
<span class="t" style="left:1431.00px;top:1440.87px;font-size:23.4px;color:#161616;letter-spacing:0.928px;">Default UI Material</span>
<svg style="left:1760.20px;top:1446.40px;" width="26.00" height="27.00" viewBox="0 0 26 27" preserveAspectRatio="none"><defs><linearGradient id="hb" x1="0" y1="0" x2="0.6" y2="1"><stop offset="0" stop-color="#86a5cf"/><stop offset="0.5" stop-color="#5d80b3"/><stop offset="1" stop-color="#3a5a8e"/></linearGradient></defs><path d="M0.5 2.2 L21.5 0.8 L24.8 2 L24.8 24.2 L21.5 26.6 L0.5 24.2 Z" fill="#27406b"/><rect x="4" y="2" width="20.6" height="22.6" fill="url(#hb)"/><path d="M4.3 2.6 H24.2 V24" fill="none" stroke="#e9eef6" stroke-width="1.3"/><path d="M2.2 2.4 V24.4" stroke="#4a6799" stroke-width="1.4"/><text x="13.2" y="19.6" font-family="Liberation Sans" font-size="14" fill="#e4ecf8" text-anchor="middle">?</text></svg>
<svg style="left:1798.60px;top:1449.00px;" width="26.00" height="24.00" viewBox="0 0 26 24" preserveAspectRatio="none"><rect x="7.6" y="0" width="4.2" height="19.4" transform="rotate(0 9.7 9.7)" fill="#333"/><rect x="7.6" y="0" width="4.2" height="19.4" transform="rotate(45 9.7 9.7)" fill="#333"/><rect x="7.6" y="0" width="4.2" height="19.4" transform="rotate(90 9.7 9.7)" fill="#333"/><rect x="7.6" y="0" width="4.2" height="19.4" transform="rotate(135 9.7 9.7)" fill="#333"/><circle cx="9.7" cy="9.7" r="6.9" fill="#333"/><circle cx="9.7" cy="9.7" r="3.1" fill="#c6c6c6"/><polygon points="19.3,13.5 26,13.5 22.6,19.5" fill="#333"/></svg>
<span class="t" style="left:1429.00px;top:1478.45px;font-size:22px;color:#777;letter-spacing:-0.051px;">Shader</span>
<div style="left:1524.80px;top:1483.70px;width:291.40px;height:28.30px;background:linear-gradient(#ececec,#dcdcdc);border:1.5px solid #a0a0a0;border-radius:7px;"></div>
<span class="t" style="left:1536.50px;top:1478.40px;font-size:17.4px;color:#8a8a8a;letter-spacing:0.886px;">UI/Default</span>
<svg style="left:1795.80px;top:1495.50px;" width="10.00" height="6.00" viewBox="0 0 10 6" preserveAspectRatio="none"><polygon points="0,0 10,0 5,6" fill="#777"/></svg>
<div class="sep" style="left:1321.00px;top:1533.50px;width:509.00px;height:1.60px;"></div>
<div class="btn" style="left:1350.70px;top:1553.00px;width:448.80px;height:41.00px;border-radius:5px;"></div>
<span class="t" style="left:1480.70px;top:1552.57px;font-size:23.4px;color:#111;letter-spacing:1.396px;">Add Component</span>
</div></div>
<div style="left:1830.00px;top:143.00px;width:25.00px;height:1479.00px;background:linear-gradient(to right,#dcdcdc,#c6c6c6 60%,#b6b6b6);border-left:1px solid #a0a0a0;"></div>
<svg style="left:1836.00px;top:155.30px;" width="13.00" height="9.70" viewBox="0 0 14 10" preserveAspectRatio="none"><polygon points="7,0 14,10 0,10" fill="#444"/></svg>
<svg style="left:1836.00px;top:1600.00px;" width="13.00" height="9.70" viewBox="0 0 14 10" preserveAspectRatio="none"><polygon points="0,0 14,0 7,10" fill="#444"/></svg>
<div style="left:1832.00px;top:178.00px;width:22.50px;height:1412.00px;background:linear-gradient(to right,#adadad,#dedede 18%,#ebebeb 50%,#e6e6e6 80%,#cfcfcf);border-radius:12px;border-top:1px solid #9a9a9a;"></div>
<div style="left:1832.00px;top:332.00px;width:21.50px;height:1255.00px;background:linear-gradient(to right,#5b7094 0,#a3b3cb 14%,#899cbc 45%,#5f779d 100%);border-radius:12px;border:1px solid #4a6088;"></div>
<div class="tab" style="left:1321.00px;top:109.00px;width:170.00px;height:34.50px;"></div>
<svg style="left:1339.40px;top:114.80px;" width="20.40" height="20.40" viewBox="0 0 22 22" preserveAspectRatio="none"><circle cx="11" cy="11" r="10.5" fill="#3a3a3a"/><rect x="9.3" y="9" width="3.6" height="8" fill="#e8e8e8"/><rect x="8" y="9" width="3" height="2" fill="#e8e8e8"/><rect x="8" y="15.5" width="6.4" height="1.8" fill="#e8e8e8"/><circle cx="11" cy="5.6" r="2" fill="#e8e8e8"/></svg>
<span class="t" style="left:1368.70px;top:106.25px;font-size:21.5px;color:#3a3a3a;letter-spacing:0.920px;">Inspector</span>
<svg style="left:1510.50px;top:116.00px;" width="21.00" height="21.00" viewBox="0 0 21 21" preserveAspectRatio="none"><g fill="#444"><rect x="0" y="2" width="21" height="2.2"/><rect x="12" y="0" width="2.4" height="6.4"/><rect x="0" y="9.5" width="7" height="2.2"/><rect x="10" y="9.5" width="11" height="2.2"/><rect x="6" y="7.3" width="2.4" height="6.4"/><rect x="0" y="17" width="21" height="2.2"/><rect x="14.5" y="14.8" width="2.4" height="6.2"/></g></svg>
<span class="t" style="left:1540.50px;top:106.25px;font-size:21.5px;color:#3a3a3a;letter-spacing:1.096px;">Lighting</span>
<svg style="left:1791.50px;top:116.50px;" width="15.00" height="18.50" viewBox="0 0 15 18.5" preserveAspectRatio="none"><path d="M2.6 4.6 Q5 -0.3 9.6 1.6 Q11.6 3 11.4 6 V9.5" fill="none" stroke="#555" stroke-width="1.7"/><rect x="0.5" y="8.7" width="13.4" height="9.3" fill="#4d4d4d"/></svg>
<svg style="left:1818.30px;top:122.80px;" width="27.00" height="11.00" viewBox="0 0 27 11" preserveAspectRatio="none"><polygon points="0,2.6 9.2,2.6 4.6,8.2" fill="#4a4a4a"/><rect x="11.6" y="0.2" width="15.2" height="1.9" fill="#444"/><rect x="11.6" y="4.3" width="15.2" height="1.9" fill="#444"/><rect x="11.6" y="8.4" width="15.2" height="1.9" fill="#444"/></svg>
<div style="left:1320.70px;top:1622.20px;width:534.30px;height:32.00px;background:linear-gradient(#727272,#5d5d5d 50%,#535353);border-top:1.2px solid #484848;border-bottom:1.2px solid #3a3a3a;"></div>
<div style="left:1331.20px;top:1623.20px;width:1.50px;height:29.50px;background:#6e6e6e;"></div>
<span class="t" style="left:1339.30px;top:1618.25px;font-size:21.5px;font-weight:bold;color:#fff;letter-spacing:0.996px;text-shadow:0 1px 1px #222;">2 Images</span>
<svg style="left:1450.00px;top:1631.20px;" width="8.00" height="13.00" viewBox="0 0 8 14" preserveAspectRatio="none"><polygon points="4,0 8,5.5 0,5.5" fill="#bdbdbd"/><polygon points="0,8.5 8,8.5 4,14" fill="#bdbdbd"/></svg>
<div style="left:1462.50px;top:1623.20px;width:1.50px;height:29.50px;background:#3e3e3e;"></div>
<div style="left:1464.00px;top:1623.20px;width:1.50px;height:29.50px;background:#6c6c6c;"></div>
<div style="left:1470.80px;top:1634.20px;width:372.60px;height:1.50px;background:#aaa;"></div>
<div style="left:1470.80px;top:1635.70px;width:372.60px;height:1.00px;background:#3a3a3a;"></div>
<div style="left:1470.80px;top:1638.70px;width:372.60px;height:1.50px;background:#aaa;"></div>
<div style="left:1470.80px;top:1640.20px;width:372.60px;height:1.00px;background:#3a3a3a;"></div>
<div style="left:1320.70px;top:1654.00px;width:534.30px;height:314.50px;background:linear-gradient(#222 0,#2b2b2b 6px,#313131 14px);"></div>
<div style="left:1374.00px;top:1700.00px;width:189.60px;height:189.60px;background:repeating-conic-gradient(#fff 0% 25%,#c9c9c9 0% 50%) 0 0/63.20px 63.20px;"></div>
<svg style="left:1374.00px;top:1700.00px;" width="189.60" height="189.60" viewBox="0 0 189.6 189.6" preserveAspectRatio="none"><defs><filter id="bl" x="-10%" y="-10%" width="120%" height="120%"><feGaussianBlur stdDeviation="1.5"/></filter><linearGradient id="sg" x1="0" y1="0" x2="0" y2="1"><stop offset="0" stop-color="#fff"/><stop offset="0.1" stop-color="#fff"/><stop offset="0.27" stop-color="#f5f5f5"/><stop offset="1" stop-color="#f5f5f5"/></linearGradient></defs><rect x="0.5" y="0.5" width="188.6" height="188.6" fill="none" stroke="#fff" stroke-width="1"/><rect x="14" y="13" width="162" height="161.5" rx="45" ry="45" fill="url(#sg)" fill-opacity="0.98"/><rect x="14" y="13" width="162" height="161.5" rx="45" ry="45" fill="none" stroke="#2c2c2c" stroke-width="4.4" filter="url(#bl)"/><g stroke="#fff" stroke-opacity="0.55" stroke-width="1.2" fill="none"><path d="M59.3 0 V189.6 M129.9 0 V189.6 M0 63.2 H189.6 M0 133.8 H189.6"/></g><g stroke="#3e3e3e" stroke-width="1.3" stroke-dasharray="15.4 16" fill="none"><path d="M58.3 0 V189.6" stroke-dashoffset="-1.9"/><path d="M128.9 0 V189.6" stroke-dashoffset="-1.9"/><path d="M0 62.2 H189.6" stroke-dashoffset="-15.3"/><path d="M0 132.8 H189.6" stroke-dashoffset="-15.3"/></g></svg>
<div style="left:1615.20px;top:1700.00px;width:189.60px;height:189.60px;background:repeating-conic-gradient(#fff 0% 25%,#c9c9c9 0% 50%) 0 0/63.20px 63.20px;"></div>
<svg style="left:1615.20px;top:1700.00px;" width="189.60" height="189.60" viewBox="0 0 189.6 189.6" preserveAspectRatio="none"><defs><filter id="bl" x="-10%" y="-10%" width="120%" height="120%"><feGaussianBlur stdDeviation="1.5"/></filter><linearGradient id="sg" x1="0" y1="0" x2="0" y2="1"><stop offset="0" stop-color="#fff"/><stop offset="0.1" stop-color="#fff"/><stop offset="0.27" stop-color="#f5f5f5"/><stop offset="1" stop-color="#f5f5f5"/></linearGradient></defs><rect x="0.5" y="0.5" width="188.6" height="188.6" fill="none" stroke="#fff" stroke-width="1"/><rect x="14" y="13" width="162" height="161.5" rx="45" ry="45" fill="url(#sg)" fill-opacity="0.98"/><rect x="14" y="13" width="162" height="161.5" rx="45" ry="45" fill="none" stroke="#2c2c2c" stroke-width="4.4" filter="url(#bl)"/><g stroke="#fff" stroke-opacity="0.55" stroke-width="1.2" fill="none"><path d="M59.3 0 V189.6 M129.9 0 V189.6 M0 63.2 H189.6 M0 133.8 H189.6"/></g><g stroke="#3e3e3e" stroke-width="1.3" stroke-dasharray="15.4 16" fill="none"><path d="M58.3 0 V189.6" stroke-dashoffset="-1.9"/><path d="M128.9 0 V189.6" stroke-dashoffset="-1.9"/><path d="M0 62.2 H189.6" stroke-dashoffset="-15.3"/><path d="M0 132.8 H189.6" stroke-dashoffset="-15.3"/></g></svg>
<span class="t" style="left:1415.20px;top:1885.10px;font-size:17.4px;color:#dcdcdc;letter-spacing:0.421px;">PauseButton</span>
<span class="t" style="left:1665.00px;top:1885.10px;font-size:17.4px;color:#dcdcdc;letter-spacing:0.779px;">Playbutton</span>
<span class="t" style="left:1447.40px;top:1920.75px;font-size:21.5px;font-weight:bold;color:#fff;letter-spacing:1.005px;text-shadow:0 2px 2px #000;">Previewing 2 of 2 Objects</span>
<div style="left:0.00px;top:0.00px;width:1855.00px;height:46.30px;background:linear-gradient(#dfe3ea 0,#dfe3ea 3px,#f2f2f2 3.4px,#dcdcdc 5px,#c9c9c9 100%);border-bottom:1px solid #a8a8a8;"></div>
<div style="left:1854.10px;top:3.50px;width:1.00px;height:1996.00px;background:#111;"></div>
<div style="left:0.00px;top:47.00px;width:1.80px;height:1952.00px;background:#c4c4c4;"></div>
<div style="left:17.60px;top:13.80px;width:23.40px;height:23.40px;background:#fc5b57;border:1px solid #e0443e;border-radius:50%;"></div>
<div style="left:56.60px;top:13.80px;width:23.40px;height:23.40px;background:#fdbc40;border:1px solid #dea033;border-radius:50%;"></div>
<div style="left:95.80px;top:13.80px;width:23.40px;height:23.40px;background:#34c84a;border:1px solid #27aa35;border-radius:50%;"></div>
<div style="left:26.10px;top:22.30px;width:6.40px;height:6.40px;background:#4d0000;border-radius:50%;"></div>
<svg style="left:259.00px;top:10.00px;" width="22.00" height="29.00" viewBox="0 0 22 29" preserveAspectRatio="none"><path d="M1 1 H15 L21 7 V28 H1 Z" fill="#f4f4f4" stroke="#c6c6c6" stroke-width="1"/><path d="M15 1 V7 H21" fill="#e4e4e4" stroke="#c6c6c6" stroke-width="1"/><path d="M6 15 L11 12 L16.5 12.5 L15 19.5 L10 18.5 Z M11 12 L12.5 16 L15 19.5 M12.5 16 L6 15" fill="none" stroke="#777" stroke-width="1.2"/></svg>
<span class="t" style="left:293.75px;top:5.79px;font-size:24.9px;color:#3d3d3d;letter-spacing:0.427px;">SampleScene</span>
<span class="t" style="left:463.60px;top:5.79px;font-size:24.9px;color:#3d3d3d;">-</span>
<span class="t" style="left:482.00px;top:5.79px;font-size:24.9px;color:#3d3d3d;letter-spacing:1.002px;">360VideoProject</span>
<span class="t" style="left:687.40px;top:5.79px;font-size:24.9px;color:#3d3d3d;">-</span>
<span class="t" style="left:705.75px;top:5.79px;font-size:24.9px;color:#3d3d3d;letter-spacing:-1.375px;">PC,</span>
<span class="t" style="left:753.25px;top:5.79px;font-size:24.9px;color:#3d3d3d;letter-spacing:1.484px;">Mac</span>
<span class="t" style="left:810.75px;top:5.79px;font-size:24.9px;color:#3d3d3d;letter-spacing:-1.609px;">&amp;</span>
<span class="t" style="left:835.75px;top:5.79px;font-size:24.9px;color:#3d3d3d;letter-spacing:0.746px;">Linux</span>
<span class="t" style="left:905.75px;top:5.79px;font-size:24.9px;color:#3d3d3d;letter-spacing:0.672px;">Standalone</span>
<span class="t" style="left:1047.90px;top:5.79px;font-size:24.9px;color:#3d3d3d;">-</span>
<span class="t" style="left:1065.25px;top:5.79px;font-size:24.9px;color:#3d3d3d;letter-spacing:0.820px;">Unity</span>
<span class="t" style="left:1134.00px;top:5.79px;font-size:24.9px;color:#3d3d3d;letter-spacing:0.677px;">2019.2.7f2</span>
<span class="t" style="left:1266.50px;top:5.79px;font-size:24.9px;color:#3d3d3d;letter-spacing:0.250px;">Personal</span>
<span class="t" style="left:1376.50px;top:5.79px;font-size:24.9px;color:#3d3d3d;letter-spacing:0.325px;">(Personal)</span>
<span class="t" style="left:1504.25px;top:5.79px;font-size:24.9px;color:#3d3d3d;letter-spacing:0.969px;">&lt;Metal&gt;</span>
<div class="btn" style="left:22.00px;top:57.50px;width:437.50px;height:41.50px;overflow:hidden;"><div style="left:61px;top:0;width:63px;height:42px;background:linear-gradient(#5e5e5e,#787878);"></div><div style="left:61.0px;top:0;width:1.5px;height:42px;background:#6a6a6a;"></div><div style="left:123.5px;top:0;width:1.5px;height:42px;background:#6a6a6a;"></div><div style="left:186.0px;top:0;width:1.5px;height:42px;background:#6a6a6a;"></div><div style="left:248.5px;top:0;width:1.5px;height:42px;background:#6a6a6a;"></div><div style="left:311.0px;top:0;width:1.5px;height:42px;background:#6a6a6a;"></div><div style="left:373.5px;top:0;width:1.5px;height:42px;background:#6a6a6a;"></div></div>
<svg style="left:36.00px;top:62.00px;" width="36.00" height="34.00" viewBox="0 0 36 34" preserveAspectRatio="none"><path d="M10 18 L5.5 13.5 Q3 12 2.5 14.5 Q4 21 11 29.5 Q14 32 20 31.5 Q27 31 29 25 Q32 17 30.5 10.5 Q29.5 7.5 27 9.5 L26.5 15 M26.8 10 L25.5 5 Q23.5 2.5 21.5 5 L21.8 13 M21.6 5.5 L20 2.8 Q17.5 1 16 4 L17 13 M16.2 5 Q13.5 2.5 11.5 5.5 L14 17.5" fill="#f6f6f6" stroke="#222" stroke-width="1.9" stroke-linejoin="round" stroke-linecap="round"/></svg>
<svg style="left:99.50px;top:60.00px;" width="33.50" height="34.50" viewBox="0 0 34 35" preserveAspectRatio="none"><g fill="#fff"><polygon points="17,0 26,9.5 8,9.5"/><polygon points="17,35 26,25.5 8,25.5"/><polygon points="0,17.5 9.5,8.5 9.5,26.5"/><polygon points="34,17.5 24.5,8.5 24.5,26.5"/><rect x="13.7" y="7" width="6.6" height="21"/><rect x="7" y="14.2" width="20" height="6.6"/></g></svg>
<svg style="left:166.00px;top:62.50px;" width="28.00" height="27.00" viewBox="0 0 28 27" preserveAspectRatio="none"><path d="M24.5 10 A11 11 0 0 0 5 7.5" fill="none" stroke="#1c1c1c" stroke-width="4.6"/><polygon points="0.5,1.5 0.5,13 11.5,12" fill="#1c1c1c"/><path d="M3.5 17 A11 11 0 0 0 23 19.5" fill="none" stroke="#1c1c1c" stroke-width="4.6"/><polygon points="27.5,25.5 27.5,14 16.5,15" fill="#1c1c1c"/></svg>
<svg style="left:224.50px;top:62.00px;" width="33.50" height="30.00" viewBox="0 0 34 30" preserveAspectRatio="none"><g stroke="#1c1c1c" stroke-width="2.8" fill="none"><path d="M4 4 L11 10 M30 4 L23 10 M4 26 L11 20 M30 26 L23 20"/></g><g fill="#1c1c1c"><polygon points="0,0 9.5,0 0,9"/><polygon points="34,0 24.5,0 34,9"/><polygon points="0,30 9.5,30 0,21"/><polygon points="34,30 24.5,30 34,21"/></g><rect x="12.3" y="10.3" width="9.4" height="9.4" fill="none" stroke="#1c1c1c" stroke-width="4.2"/></svg>
<svg style="left:287.00px;top:60.50px;" width="34.00" height="33.50" viewBox="0 0 34 33.5" preserveAspectRatio="none"><rect x="4.5" y="4.5" width="25" height="24.5" fill="none" stroke="#1c1c1c" stroke-width="3.4"/><g fill="#1c1c1c"><circle cx="4.5" cy="4.5" r="4.2"/><circle cx="29.5" cy="4.5" r="4.2"/><circle cx="4.5" cy="29" r="4.2"/><circle cx="29.5" cy="29" r="4.2"/></g><circle cx="17" cy="16.7" r="4.3" fill="none" stroke="#333" stroke-width="1.5"/></svg>
<svg style="left:348.00px;top:60.50px;" width="37.00" height="35.50" viewBox="0 0 37 35.5" preserveAspectRatio="none"><g fill="none" stroke="#2a2a2a"><circle cx="18.5" cy="17.7" r="15.5" stroke-width="3" stroke-dasharray="13.5 10.85" stroke-dashoffset="-5.4"/><circle cx="18.5" cy="17.7" r="11.5" stroke-width="2" stroke-dasharray="9.5 8.56" stroke-dashoffset="-4.3"/></g><g fill="#2a2a2a"><rect x="17.6" y="9.5" width="1.8" height="16.5"/><rect x="10.2" y="16.8" width="16.5" height="1.8"/><polygon points="18.5,7.5 21.5,11.5 15.5,11.5"/><polygon points="18.5,28 21.5,24 15.5,24"/><polygon points="8.2,17.7 12.2,14.7 12.2,20.7"/><polygon points="28.8,17.7 24.8,14.7 24.8,20.7"/><polygon points="0,0 9,0 0,9"/><polygon points="37,0 28,0 37,9"/><polygon points="0,35.5 9,35.5 0,26.5"/><polygon points="37,35.5 28,35.5 37,26.5"/></g></svg>
<svg style="left:413.50px;top:63.00px;" width="31.00" height="30.00" viewBox="0 0 31 30" preserveAspectRatio="none"><g fill="#505050" stroke="none"><path d="M27 2.5 L30 5.5 L9.5 26 L6.5 23 Z"/><polygon points="5.5,24 8.5,27 2.5,29"/><path d="M25 0.8 L27.5 0 L30.5 3 L29.8 5.5 Z"/></g><path d="M12 10 L27.5 26" stroke="#505050" stroke-width="4.6" stroke-linecap="butt"/><path d="M2.5 4.5 Q2 10.5 8 11.5 Q12.5 11 12.5 6 Q12.3 4.5 11.5 3.2 L8.5 7 L5.8 5 L8 1 Q3.5 0.5 2.5 4.5Z" fill="#505050"/></svg>
<div class="btn" style="left:499.00px;top:61.00px;width:248.50px;height:34.50px;"><div style="left:123.5px;top:0;width:1.5px;height:34px;background:#555;"></div></div>
<svg style="left:523.00px;top:68.00px;" width="22.00" height="20.00" viewBox="0 0 22 20" preserveAspectRatio="none"><rect x="0.5" y="1" width="8" height="12" fill="#555"/><rect x="12" y="0" width="9" height="17" fill="#555"/><circle cx="5" cy="12" r="3.6" fill="#e8465a"/><circle cx="16.5" cy="16" r="3.6" fill="#e8465a"/></svg>
<span class="t" style="left:552.00px;top:57.25px;font-size:21.5px;color:#1a1a1a;letter-spacing:0.047px;">Pivot</span>
<svg style="left:641.50px;top:66.50px;" width="22.00" height="22.00" viewBox="0 0 22 22" preserveAspectRatio="none"><circle cx="11" cy="11" r="10.4" fill="#9c9c9c" stroke="#555" stroke-width="1.2"/><path d="M7 1.5 V20.5 M13.5 1 V21 M1.5 7.5 H20.5 M1 14 H21" stroke="#5a5a5a" stroke-width="1.2" fill="none"/><path d="M4.5 5 V16.5 H14" stroke="#e8465a" stroke-width="2.6" fill="none"/></svg>
<span class="t" style="left:669.50px;top:57.25px;font-size:21.5px;color:#1a1a1a;letter-spacing:0.669px;">Global</span>
<div class="btn" style="left:794.00px;top:57.50px;width:186.50px;height:41.50px;"><div style="left:61.5px;top:0;width:1.5px;height:41px;background:#666;"></div><div style="left:124px;top:0;width:1.5px;height:41px;background:#666;"></div></div>
<svg style="left:809.00px;top:64.50px;" width="30.00" height="28.00" viewBox="0 0 30 28" preserveAspectRatio="none"><polygon points="0,0 30,14 0,28" fill="#111"/></svg>
<svg style="left:876.00px;top:65.50px;" width="20.00" height="26.00" viewBox="0 0 20 26" preserveAspectRatio="none"><rect x="0" y="0" width="6.5" height="26" fill="#111"/><rect x="13" y="0" width="6.5" height="26" fill="#111"/></svg>
<svg style="left:933.00px;top:65.00px;" width="31.00" height="27.00" viewBox="0 0 31 27" preserveAspectRatio="none"><polygon points="0,0 25,13.5 0,27" fill="#111"/><rect x="24.5" y="0.5" width="5.5" height="26" fill="#111"/></svg>
<div class="btn" style="left:1077.00px;top:61.50px;width:151.00px;height:34.00px;"></div>
<svg style="left:1094.00px;top:66.50px;" width="24.00" height="24.00" viewBox="0 0 24 24" preserveAspectRatio="none"><circle cx="12" cy="12" r="11.5" fill="#8e8e8e"/><path d="M5.5 11.5 L10.5 17 L19 6.5" fill="none" stroke="#fff" stroke-width="3.6"/></svg>
<span class="t" style="left:1124.00px;top:57.25px;font-size:21.5px;color:#1a1a1a;letter-spacing:0.609px;">Collab</span>
<svg style="left:1203.50px;top:75.25px;" width="11.00" height="6.50" viewBox="0 0 10 6" preserveAspectRatio="none"><polygon points="0,0 10,0 5,6" fill="#222"/></svg>
<div class="btn" style="left:1249.00px;top:61.50px;width:61.50px;height:34.00px;"></div>
<svg style="left:1265.00px;top:67.50px;" width="30.00" height="21.00" viewBox="0 0 30 21" preserveAspectRatio="none"><path d="M7 19.5 Q1.5 19.5 1.5 14.5 Q1.5 10.5 6 9.8 Q6.5 5 10.5 4 Q13 3.5 14.5 5.5 Q17 1 21.5 2.2 Q25.5 3.8 25 9 Q29 10.5 28.5 15 Q28 19.5 23 19.5 Z" fill="none" stroke="#222" stroke-width="2.4"/></svg>
<div class="btn" style="left:1331.50px;top:61.50px;width:154.50px;height:34.00px;"></div>
<span class="t" style="left:1342.70px;top:57.25px;font-size:21.5px;color:#1a1a1a;letter-spacing:1.102px;">Account</span>
<svg style="left:1461.50px;top:75.25px;" width="11.00" height="6.50" viewBox="0 0 10 6" preserveAspectRatio="none"><polygon points="0,0 10,0 5,6" fill="#222"/></svg>
<div class="btn" style="left:1507.00px;top:61.50px;width:155.00px;height:34.00px;"></div>
<span class="t" style="left:1519.00px;top:57.25px;font-size:21.5px;color:#1a1a1a;letter-spacing:0.091px;">Layers</span>
<svg style="left:1636.80px;top:75.25px;" width="11.00" height="6.50" viewBox="0 0 10 6" preserveAspectRatio="none"><polygon points="0,0 10,0 5,6" fill="#222"/></svg>
<div class="btn" style="left:1683.00px;top:61.50px;width:155.00px;height:34.00px;"></div>
<span class="t" style="left:1695.00px;top:57.25px;font-size:21.5px;color:#1a1a1a;letter-spacing:0.887px;">Layout</span>
<svg style="left:1812.80px;top:75.25px;" width="11.00" height="6.50" viewBox="0 0 10 6" preserveAspectRatio="none"><polygon points="0,0 10,0 5,6" fill="#222"/></svg>
<div style="left:2.00px;top:140.80px;width:393.00px;height:1090.40px;background:#c2c2c2;border-right:2.2px solid #8a8a8a;border-bottom:2.2px solid #8a8a8a;border-top:2px solid #8a8a8a;box-shadow:inset -2px -2.2px 0 #d4d4d4;"></div>
<div class="tab" style="left:2.00px;top:109.00px;width:170.00px;height:34.50px;border-top:3.7px solid #3a78c8;"></div>
<svg style="left:15.50px;top:117.50px;" width="22.00" height="16.00" viewBox="0 0 22 16" preserveAspectRatio="none"><g fill="#444"><rect x="0" y="0" width="3" height="2.4"/><rect x="5.5" y="0" width="16.5" height="2.4"/><rect x="3" y="6.6" width="3" height="2.4"/><rect x="8" y="6.6" width="14" height="2.4"/><rect x="3" y="13.2" width="3" height="2.4"/><rect x="8" y="13.2" width="14" height="2.4"/></g></svg>
<span class="t" style="left:46.00px;top:106.25px;font-size:21.5px;color:#3a3a3a;letter-spacing:0.562px;">Hierarchy</span>
<svg style="left:330.00px;top:116.50px;" width="15.00" height="18.50" viewBox="0 0 15 18.5" preserveAspectRatio="none"><path d="M2.6 4.6 Q5 -0.3 9.6 1.6 Q11.6 3 11.4 6 V9.5" fill="none" stroke="#555" stroke-width="1.7"/><rect x="0.5" y="8.7" width="13.4" height="9.3" fill="#4d4d4d"/></svg>
<svg style="left:356.30px;top:122.60px;" width="27.00" height="11.00" viewBox="0 0 27 11" preserveAspectRatio="none"><polygon points="0,2.6 9.2,2.6 4.6,8.2" fill="#4a4a4a"/><rect x="11.6" y="0.2" width="15.2" height="1.9" fill="#444"/><rect x="11.6" y="4.3" width="15.2" height="1.9" fill="#444"/><rect x="11.6" y="8.4" width="15.2" height="1.9" fill="#444"/></svg>
<div class="tbar" style="left:2.00px;top:142.50px;width:391.00px;height:33.00px;"></div>
<div style="left:12.00px;top:143.00px;width:1.50px;height:31.00px;background:#9a9a9a;"></div>
<div style="left:102.50px;top:143.00px;width:1.50px;height:31.00px;background:#9a9a9a;"></div>
<span class="t" style="left:24.00px;top:138.90px;font-size:17.8px;color:#1a1a1a;letter-spacing:0.025px;">Create</span>
<svg style="left:86.00px;top:154.50px;" width="9.00" height="5.00" viewBox="0 0 10 6" preserveAspectRatio="none"><polygon points="0,0 10,0 5,6" fill="#555"/></svg>
<div style="left:117.50px;top:145.00px;width:266.50px;height:26.50px;background:#dadada;border:1.5px solid #8e8e8e;border-top-color:#555;border-radius:14px;box-shadow:inset 0 2px 2px rgba(0,0,0,.22),0 1px 0 rgba(255,255,255,.5);"></div>
<svg style="left:125.00px;top:150.50px;" width="22.00" height="18.00" viewBox="0 0 22 18" preserveAspectRatio="none"><circle cx="6.5" cy="6.5" r="5" fill="none" stroke="#8a8a8a" stroke-width="1.8"/><path d="M10 10.5 L14.5 16" stroke="#8a8a8a" stroke-width="2.2"/><polygon points="13,4 21,4 17,9" fill="#8a8a8a"/></svg>
<span class="t" style="left:148.50px;top:138.90px;font-size:17.8px;color:#8c8c8c;letter-spacing:0.867px;">All</span>
<div style="left:2.00px;top:176.00px;width:390.80px;height:32.30px;background:linear-gradient(#e2e2e2,#d6d6d6);border-bottom:1.5px solid #a2a2a2;"></div>
<svg style="left:37.50px;top:186.30px;" width="17.00" height="14.60" viewBox="0 0 10 8" preserveAspectRatio="none"><polygon points="0,0 10,0 5,8" fill="#7b7b7b"/></svg>
<svg style="left:61.00px;top:176.00px;" width="30.00" height="31.00" viewBox="0 0 30 31" preserveAspectRatio="none"><path d="M1.8 15 L24.3 1.8 L28 8.5 L28 22 L24.7 29 Z" fill="#fff" stroke="#1a1a1a" stroke-width="3.2" stroke-linejoin="round"/><path d="M17.7 15 L2 15 M17.7 15 L24.3 2 M17.7 15 L24.7 29" stroke="#1a1a1a" stroke-width="3.2" fill="none"/></svg>
<span class="t" style="left:96.00px;top:171.75px;font-size:21.5px;font-weight:bold;color:#111;letter-spacing:0.436px;">SampleScene*</span>
<svg style="left:360.30px;top:187.40px;" width="27.00" height="11.00" viewBox="0 0 27 11" preserveAspectRatio="none"><polygon points="0,2.6 9.2,2.6 4.6,8.2" fill="#4a4a4a"/><rect x="11.6" y="0.2" width="15.2" height="1.9" fill="#444"/><rect x="11.6" y="4.3" width="15.2" height="1.9" fill="#444"/><rect x="11.6" y="8.4" width="15.2" height="1.9" fill="#444"/></svg>
<div style="left:2.00px;top:208.50px;width:30.50px;height:1018.20px;background:#ababab;"></div>
<svg style="left:88.60px;top:208.70px;opacity:1;" width="30.60" height="30.60" viewBox="0 0 28 28" preserveAspectRatio="none"><defs><linearGradient id="cl" x1="0" y1="0" x2="0" y2="1"><stop offset="0" stop-color="#ececec"/><stop offset="1" stop-color="#d6d6d6"/></linearGradient><linearGradient id="cr" x1="0" y1="0" x2="0" y2="1"><stop offset="0" stop-color="#c4c4c4"/><stop offset="1" stop-color="#a0a0a0"/></linearGradient></defs><polygon points="14,2.5 26,7.5 14,12.5 2,7.5" fill="#f3f3f3"/><polygon points="2,7.5 14,12.5 14,26.5 2,20.5" fill="url(#cl)"/><polygon points="26,7.5 14,12.5 14,26.5 26,20.5" fill="url(#cr)"/><polygon points="14,2.5 26,7.5 26,20.5 14,26.5 2,20.5 2,7.5" fill="none" stroke="#bdbdbd" stroke-width="0.5" stroke-opacity="0.7"/></svg>
<span class="t" style="left:124.00px;top:202.85px;font-size:21.5px;color:#0c0c0c;letter-spacing:0.515px;">Main Camera</span>
<svg style="left:88.60px;top:239.95px;opacity:1;" width="30.60" height="30.60" viewBox="0 0 28 28" preserveAspectRatio="none"><defs><linearGradient id="cl" x1="0" y1="0" x2="0" y2="1"><stop offset="0" stop-color="#ececec"/><stop offset="1" stop-color="#d6d6d6"/></linearGradient><linearGradient id="cr" x1="0" y1="0" x2="0" y2="1"><stop offset="0" stop-color="#c4c4c4"/><stop offset="1" stop-color="#a0a0a0"/></linearGradient></defs><polygon points="14,2.5 26,7.5 14,12.5 2,7.5" fill="#f3f3f3"/><polygon points="2,7.5 14,12.5 14,26.5 2,20.5" fill="url(#cl)"/><polygon points="26,7.5 14,12.5 14,26.5 26,20.5" fill="url(#cr)"/><polygon points="14,2.5 26,7.5 26,20.5 14,26.5 2,20.5 2,7.5" fill="none" stroke="#bdbdbd" stroke-width="0.5" stroke-opacity="0.7"/></svg>
<span class="t" style="left:124.00px;top:234.10px;font-size:21.5px;color:#0c0c0c;letter-spacing:0.952px;">Directional Light</span>
<svg style="left:88.60px;top:271.20px;opacity:1;" width="30.60" height="30.60" viewBox="0 0 28 28" preserveAspectRatio="none"><defs><linearGradient id="cl" x1="0" y1="0" x2="0" y2="1"><stop offset="0" stop-color="#ececec"/><stop offset="1" stop-color="#d6d6d6"/></linearGradient><linearGradient id="cr" x1="0" y1="0" x2="0" y2="1"><stop offset="0" stop-color="#c4c4c4"/><stop offset="1" stop-color="#a0a0a0"/></linearGradient></defs><polygon points="14,2.5 26,7.5 14,12.5 2,7.5" fill="#f3f3f3"/><polygon points="2,7.5 14,12.5 14,26.5 2,20.5" fill="url(#cl)"/><polygon points="26,7.5 14,12.5 14,26.5 26,20.5" fill="url(#cr)"/><polygon points="14,2.5 26,7.5 26,20.5 14,26.5 2,20.5 2,7.5" fill="none" stroke="#bdbdbd" stroke-width="0.5" stroke-opacity="0.7"/></svg>
<span class="t" style="left:124.00px;top:265.35px;font-size:21.5px;color:#0c0c0c;letter-spacing:-0.321px;">Canvas</span>
<svg style="left:64.75px;top:279.70px;" width="16.50" height="14.60" viewBox="0 0 10 8" preserveAspectRatio="none"><polygon points="0,0 10,0 5,8" fill="#7b7b7b"/></svg>
<div style="left:2.00px;top:301.05px;width:390.50px;height:31.25px;background:#4081de;"></div>
<div style="left:2.00px;top:301.05px;width:30.50px;height:31.25px;background:#3f76c4;"></div>
<svg style="left:115.60px;top:302.45px;opacity:1;" width="30.60" height="30.60" viewBox="0 0 28 28" preserveAspectRatio="none"><defs><linearGradient id="cl" x1="0" y1="0" x2="0" y2="1"><stop offset="0" stop-color="#ececec"/><stop offset="1" stop-color="#d6d6d6"/></linearGradient><linearGradient id="cr" x1="0" y1="0" x2="0" y2="1"><stop offset="0" stop-color="#c4c4c4"/><stop offset="1" stop-color="#a0a0a0"/></linearGradient></defs><polygon points="14,2.5 26,7.5 14,12.5 2,7.5" fill="#f3f3f3"/><polygon points="2,7.5 14,12.5 14,26.5 2,20.5" fill="url(#cl)"/><polygon points="26,7.5 14,12.5 14,26.5 26,20.5" fill="url(#cr)"/><polygon points="14,2.5 26,7.5 26,20.5 14,26.5 2,20.5 2,7.5" fill="none" stroke="#bdbdbd" stroke-width="0.5" stroke-opacity="0.7"/></svg>
<span class="t" style="left:151.00px;top:296.60px;font-size:21.5px;color:#fff;letter-spacing:0.888px;">Playbutton</span>
<svg style="left:92.20px;top:310.85px;" width="17.20" height="14.80" viewBox="0 0 10 8" preserveAspectRatio="none"><polygon points="0,0 10,0 5,8" fill="#28508f"/></svg>
<svg style="left:143.20px;top:333.70px;opacity:1;" width="30.60" height="30.60" viewBox="0 0 28 28" preserveAspectRatio="none"><defs><linearGradient id="cl" x1="0" y1="0" x2="0" y2="1"><stop offset="0" stop-color="#ececec"/><stop offset="1" stop-color="#d6d6d6"/></linearGradient><linearGradient id="cr" x1="0" y1="0" x2="0" y2="1"><stop offset="0" stop-color="#c4c4c4"/><stop offset="1" stop-color="#a0a0a0"/></linearGradient></defs><polygon points="14,2.5 26,7.5 14,12.5 2,7.5" fill="#f3f3f3"/><polygon points="2,7.5 14,12.5 14,26.5 2,20.5" fill="url(#cl)"/><polygon points="26,7.5 14,12.5 14,26.5 26,20.5" fill="url(#cr)"/><polygon points="14,2.5 26,7.5 26,20.5 14,26.5 2,20.5 2,7.5" fill="none" stroke="#bdbdbd" stroke-width="0.5" stroke-opacity="0.7"/></svg>
<span class="t" style="left:178.60px;top:327.85px;font-size:21.5px;color:#0c0c0c;letter-spacing:1.988px;">Text</span>
<div style="left:2.00px;top:363.55px;width:390.50px;height:31.25px;background:#4081de;"></div>
<div style="left:2.00px;top:363.55px;width:30.50px;height:31.25px;background:#3f76c4;"></div>
<svg style="left:115.60px;top:364.95px;opacity:1;" width="30.60" height="30.60" viewBox="0 0 28 28" preserveAspectRatio="none"><defs><linearGradient id="cl" x1="0" y1="0" x2="0" y2="1"><stop offset="0" stop-color="#ececec"/><stop offset="1" stop-color="#d6d6d6"/></linearGradient><linearGradient id="cr" x1="0" y1="0" x2="0" y2="1"><stop offset="0" stop-color="#c4c4c4"/><stop offset="1" stop-color="#a0a0a0"/></linearGradient></defs><polygon points="14,2.5 26,7.5 14,12.5 2,7.5" fill="#f3f3f3"/><polygon points="2,7.5 14,12.5 14,26.5 2,20.5" fill="url(#cl)"/><polygon points="26,7.5 14,12.5 14,26.5 26,20.5" fill="url(#cr)"/><polygon points="14,2.5 26,7.5 26,20.5 14,26.5 2,20.5 2,7.5" fill="none" stroke="#bdbdbd" stroke-width="0.5" stroke-opacity="0.7"/></svg>
<span class="t" style="left:151.00px;top:359.10px;font-size:21.5px;color:#fff;letter-spacing:0.388px;">PauseButton</span>
<svg style="left:92.20px;top:373.35px;" width="17.20" height="14.80" viewBox="0 0 10 8" preserveAspectRatio="none"><polygon points="0,0 10,0 5,8" fill="#28508f"/></svg>
<svg style="left:143.20px;top:396.20px;opacity:1;" width="30.60" height="30.60" viewBox="0 0 28 28" preserveAspectRatio="none"><defs><linearGradient id="cl" x1="0" y1="0" x2="0" y2="1"><stop offset="0" stop-color="#ececec"/><stop offset="1" stop-color="#d6d6d6"/></linearGradient><linearGradient id="cr" x1="0" y1="0" x2="0" y2="1"><stop offset="0" stop-color="#c4c4c4"/><stop offset="1" stop-color="#a0a0a0"/></linearGradient></defs><polygon points="14,2.5 26,7.5 14,12.5 2,7.5" fill="#f3f3f3"/><polygon points="2,7.5 14,12.5 14,26.5 2,20.5" fill="url(#cl)"/><polygon points="26,7.5 14,12.5 14,26.5 26,20.5" fill="url(#cr)"/><polygon points="14,2.5 26,7.5 26,20.5 14,26.5 2,20.5 2,7.5" fill="none" stroke="#bdbdbd" stroke-width="0.5" stroke-opacity="0.7"/></svg>
<span class="t" style="left:178.60px;top:390.35px;font-size:21.5px;color:#0c0c0c;letter-spacing:1.988px;">Text</span>
<svg style="left:88.60px;top:427.45px;opacity:1;" width="30.60" height="30.60" viewBox="0 0 28 28" preserveAspectRatio="none"><defs><linearGradient id="cl" x1="0" y1="0" x2="0" y2="1"><stop offset="0" stop-color="#ececec"/><stop offset="1" stop-color="#d6d6d6"/></linearGradient><linearGradient id="cr" x1="0" y1="0" x2="0" y2="1"><stop offset="0" stop-color="#c4c4c4"/><stop offset="1" stop-color="#a0a0a0"/></linearGradient></defs><polygon points="14,2.5 26,7.5 14,12.5 2,7.5" fill="#f3f3f3"/><polygon points="2,7.5 14,12.5 14,26.5 2,20.5" fill="url(#cl)"/><polygon points="26,7.5 14,12.5 14,26.5 26,20.5" fill="url(#cr)"/><polygon points="14,2.5 26,7.5 26,20.5 14,26.5 2,20.5 2,7.5" fill="none" stroke="#bdbdbd" stroke-width="0.5" stroke-opacity="0.7"/></svg>
<span class="t" style="left:124.00px;top:421.60px;font-size:21.5px;color:#0c0c0c;letter-spacing:0.093px;">EventSystem</span>
<svg style="left:88.60px;top:458.70px;opacity:1;" width="30.60" height="30.60" viewBox="0 0 28 28" preserveAspectRatio="none"><defs><linearGradient id="cl" x1="0" y1="0" x2="0" y2="1"><stop offset="0" stop-color="#ececec"/><stop offset="1" stop-color="#d6d6d6"/></linearGradient><linearGradient id="cr" x1="0" y1="0" x2="0" y2="1"><stop offset="0" stop-color="#c4c4c4"/><stop offset="1" stop-color="#a0a0a0"/></linearGradient></defs><polygon points="14,2.5 26,7.5 14,12.5 2,7.5" fill="#f3f3f3"/><polygon points="2,7.5 14,12.5 14,26.5 2,20.5" fill="url(#cl)"/><polygon points="26,7.5 14,12.5 14,26.5 26,20.5" fill="url(#cr)"/><polygon points="14,2.5 26,7.5 26,20.5 14,26.5 2,20.5 2,7.5" fill="none" stroke="#bdbdbd" stroke-width="0.5" stroke-opacity="0.7"/></svg>
<span class="t" style="left:124.00px;top:452.85px;font-size:21.5px;color:#0c0c0c;letter-spacing:0.362px;">Video Player</span>
<div class="tab" style="left:535.00px;top:109.00px;width:133.00px;height:34.50px;"></div>
<svg style="left:420.00px;top:115.00px;" width="22.00" height="22.00" viewBox="0 0 22 22" preserveAspectRatio="none"><g fill="#444"><rect x="5" y="0" width="2.4" height="22"/><rect x="14" y="0" width="2.4" height="22"/><rect x="0" y="5.5" width="22" height="2.4"/><rect x="0" y="14" width="22" height="2.4"/></g></svg>
<span class="t" style="left:448.00px;top:106.25px;font-size:21.5px;color:#3a3a3a;letter-spacing:-0.542px;">Scene</span>
<svg style="left:556.00px;top:116.50px;" width="17.00" height="18.00" viewBox="0 0 17 18" preserveAspectRatio="none"><path d="M16 3.5 A8.6 8.6 0 1 0 16 14.5 L9 9 Z" fill="#444"/></svg>
<span class="t" style="left:582.00px;top:106.25px;font-size:21.5px;color:#3a3a3a;letter-spacing:-0.188px;">Game</span>
<svg style="left:688.00px;top:114.50px;" width="22.00" height="23.00" viewBox="0 0 22 23" preserveAspectRatio="none"><rect x="1" y="7" width="17" height="15" fill="#555"/><path d="M18 7 L21 4.5 V19 L18 22 Z" fill="#777"/><path d="M1 7 L4 4.5 H21 L18 7 Z" fill="#888"/><path d="M6 6 Q4 1 8 1.5 Q11 2.5 10.5 6 Q11 1.5 14.5 1.5 Q17.5 2 15.5 6" fill="none" stroke="#555" stroke-width="1.6"/></svg>
<span class="t" style="left:716.00px;top:106.25px;font-size:21.5px;color:#3a3a3a;letter-spacing:0.386px;">Asset Store</span>
<svg style="left:1276.50px;top:122.80px;" width="27.00" height="11.00" viewBox="0 0 27 11" preserveAspectRatio="none"><polygon points="0,2.6 9.2,2.6 4.6,8.2" fill="#4a4a4a"/><rect x="11.6" y="0.2" width="15.2" height="1.9" fill="#444"/><rect x="11.6" y="4.3" width="15.2" height="1.9" fill="#444"/><rect x="11.6" y="8.4" width="15.2" height="1.9" fill="#444"/></svg>
<div style="left:399.00px;top:140.80px;width:916.00px;height:1090.00px;background:#8b8783;border-top:2px solid #8a8a8a;border-left:1.8px solid #8a8a8a;"></div>
<div class="tbar" style="left:400.00px;top:142.50px;width:914.00px;height:33.00px;"></div>
<div style="left:411.50px;top:143.00px;width:1.50px;height:31.00px;background:#9c9c9c;"></div>
<div style="left:567.00px;top:143.00px;width:1.50px;height:31.00px;background:#9c9c9c;"></div>
<div style="left:579.00px;top:143.00px;width:1.50px;height:31.00px;background:#9c9c9c;"></div>
<div style="left:891.50px;top:143.00px;width:1.50px;height:31.00px;background:#9c9c9c;"></div>
<div style="left:1091.00px;top:143.00px;width:1.50px;height:31.00px;background:#9c9c9c;"></div>
<div style="left:1263.00px;top:143.00px;width:1.50px;height:31.00px;background:#9c9c9c;"></div>
<span class="t" style="left:422.70px;top:138.90px;font-size:17.4px;color:#1a1a1a;letter-spacing:0.496px;">Display 1</span>
<svg style="left:551.75px;top:152.00px;" width="8.50" height="13.00" viewBox="0 0 8 14" preserveAspectRatio="none"><polygon points="4,0 8,5.5 0,5.5" fill="#444"/><polygon points="0,8.5 8,8.5 4,14" fill="#444"/></svg>
<span class="t" style="left:590.00px;top:138.90px;font-size:17.4px;color:#1a1a1a;letter-spacing:0.520px;">Free Aspect</span>
<svg style="left:876.25px;top:152.00px;" width="8.50" height="13.00" viewBox="0 0 8 14" preserveAspectRatio="none"><polygon points="4,0 8,5.5 0,5.5" fill="#444"/><polygon points="0,8.5 8,8.5 4,14" fill="#444"/></svg>
<span class="t" style="left:903.00px;top:138.90px;font-size:17.4px;color:#1a1a1a;letter-spacing:-0.479px;">Scale</span>
<div style="left:965.00px;top:155.50px;width:51.00px;height:7.00px;background:linear-gradient(#8c8c8c,#bdbdbd);border-radius:4px;"></div>
<div style="left:956.00px;top:149.50px;width:18.50px;height:18.50px;background:linear-gradient(#fbfbfb,#cfcfcf);border:1.5px solid #777;border-radius:50%;"></div>
<span class="t" style="left:1029.50px;top:138.90px;font-size:17.4px;color:#1a1a1a;letter-spacing:0.125px;">1x</span>
<span class="t" style="left:1100.00px;top:138.90px;font-size:17.4px;color:#1a1a1a;letter-spacing:0.724px;">Maximize On Play</span>
<div style="left:1264.50px;top:143.00px;width:49.00px;height:31.00px;overflow:hidden;"><span class="t" style="left:8.5px;top:-4.3px;font-size:17.4px;letter-spacing:0.9px;color:#1a1a1a;">Mute Audio</span></div>
<div style="left:402.30px;top:175.60px;width:908.70px;height:1051.00px;background:linear-gradient(to bottom,rgba(108,102,100,0) 0px,rgba(108,102,100,0) 624px,#6c6664 624px,#6b6461 654px,#6a635e 704px,#6a615b 1051px),radial-gradient(ellipse 1500px 220px at 454px 793.9px,#6c6867 0%,#6c6867 100.00%,#7c7c7c 101.36%,#8e9696 103.41%,#9eaaaa 105.45%,#b0c4c4 108.55%,#c6dcdc 111.59%,#d4eeec 114.77%,rgba(224,255,252,0) 117.18%),linear-gradient(to bottom,#576b8f 0px,#5d759c 114px,#6984aa 205px,#7491ba 265px,#82a0c8 325px,#94b4da 386px,#a8c8ea 431px,#c0def6 464px,#d7f2ff 491px,#e4ffff 512px,#f0fffd 527px,#e0fffc 536px,#e0fffc 1051px);"></div>
<div style="left:510.00px;top:1099.00px;width:306.50px;height:53.50px;background:#f5f5f5;border-radius:6px;box-shadow:0 0 1.5px rgba(0,0,0,.35);"></div>
<span class="t" style="left:625.00px;top:1107.81px;font-size:27.3px;color:#4f4f4f;letter-spacing:-0.219px;">pause</span>
<div style="left:901.00px;top:1099.00px;width:306.50px;height:53.50px;background:#f5f5f5;border-radius:6px;box-shadow:0 0 1.5px rgba(0,0,0,.35);"></div>
<span class="t" style="left:1020.00px;top:1105.81px;font-size:27.3px;color:#4f4f4f;letter-spacing:-0.094px;">PLAY</span>
<div style="left:2.00px;top:1268.30px;width:768.00px;height:699.70px;background:#c2c2c2;border-right:1.9px solid #8c8c8c;border-top:1.8px solid #8a8a8a;"></div>
<div class="tab" style="left:2.00px;top:1237.00px;width:142.50px;height:34.00px;"></div>
<svg style="left:15.50px;top:1244.00px;" width="22.00" height="18.00" viewBox="0 0 22 18" preserveAspectRatio="none"><path d="M1 4 Q1 1 3.5 1 H9 Q11 1 11.5 3 H19 Q21 3 21 5 V15 Q21 17 19 17 H3 Q1 17 1 15 Z" fill="#8e8e8e" stroke="#4a4a4a" stroke-width="1.6"/><path d="M1.5 6.5 H20.5" stroke="#4a4a4a" stroke-width="1.4"/></svg>
<span class="t" style="left:46.00px;top:1234.75px;font-size:21.5px;color:#3a3a3a;letter-spacing:0.513px;">Project</span>
<svg style="left:165.00px;top:1243.50px;" width="18.00" height="21.00" viewBox="0 0 18 21" preserveAspectRatio="none"><rect x="1" y="1" width="16" height="19" fill="#d6d6d6" stroke="#3f3f3f" stroke-width="1.8"/><g fill="#3f3f3f"><rect x="4" y="5" width="9" height="1.8"/><rect x="4" y="9" width="7" height="1.8"/><rect x="4" y="13" width="9" height="1.8"/></g></svg>
<span class="t" style="left:191.00px;top:1234.75px;font-size:21.5px;color:#3a3a3a;letter-spacing:0.685px;">Console</span>
<svg style="left:705.00px;top:1244.30px;" width="15.00" height="18.50" viewBox="0 0 15 18.5" preserveAspectRatio="none"><path d="M2.6 4.6 Q5 -0.3 9.6 1.6 Q11.6 3 11.4 6 V9.5" fill="none" stroke="#555" stroke-width="1.7"/><rect x="0.5" y="8.7" width="13.4" height="9.3" fill="#4d4d4d"/></svg>
<svg style="left:731.10px;top:1250.30px;" width="27.00" height="11.00" viewBox="0 0 27 11" preserveAspectRatio="none"><polygon points="0,2.6 9.2,2.6 4.6,8.2" fill="#4a4a4a"/><rect x="11.6" y="0.2" width="15.2" height="1.9" fill="#444"/><rect x="11.6" y="4.3" width="15.2" height="1.9" fill="#444"/><rect x="11.6" y="8.4" width="15.2" height="1.9" fill="#444"/></svg>
<div class="tbar" style="left:2.00px;top:1270.00px;width:767.00px;height:33.00px;"></div>
<div style="left:14.50px;top:1270.50px;width:1.50px;height:31.00px;background:#9a9a9a;"></div>
<div style="left:104.50px;top:1270.50px;width:1.50px;height:31.00px;background:#9a9a9a;"></div>
<div style="left:570.00px;top:1270.50px;width:1.50px;height:31.00px;background:#9a9a9a;"></div>
<div style="left:612.50px;top:1270.50px;width:1.50px;height:31.00px;background:#9a9a9a;"></div>
<div style="left:655.00px;top:1270.50px;width:1.50px;height:31.00px;background:#9a9a9a;"></div>
<div style="left:698.00px;top:1270.50px;width:1.50px;height:31.00px;background:#9a9a9a;"></div>
<div style="left:761.00px;top:1270.50px;width:1.50px;height:31.00px;background:#9a9a9a;"></div>
<span class="t" style="left:26.00px;top:1266.70px;font-size:17.8px;color:#1a1a1a;letter-spacing:0.025px;">Create</span>
<svg style="left:88.50px;top:1282.50px;" width="9.00" height="5.00" viewBox="0 0 10 6" preserveAspectRatio="none"><polygon points="0,0 10,0 5,6" fill="#555"/></svg>
<div style="left:124.00px;top:1272.50px;width:436.00px;height:26.50px;background:#dadada;border:1.5px solid #8e8e8e;border-top-color:#555;border-radius:14px;box-shadow:inset 0 2px 2px rgba(0,0,0,.22),0 1px 0 rgba(255,255,255,.5);"></div>
<svg style="left:134.00px;top:1278.00px;" width="16.00" height="16.00" viewBox="0 0 16 16" preserveAspectRatio="none"><circle cx="6" cy="6" r="4.6" fill="none" stroke="#8a8a8a" stroke-width="1.8"/><path d="M9.5 9.5 L14.5 14.5" stroke="#8a8a8a" stroke-width="2.2"/></svg>
<svg style="left:580.00px;top:1276.00px;" width="23.00" height="21.00" viewBox="0 0 23 21" preserveAspectRatio="none"><g fill="#6a6a6a"><polygon points="0,12 6,2 12,12"/><circle cx="14" cy="5.5" r="5"/><rect x="14" y="12" width="8" height="8"/></g></svg>
<svg style="left:622.00px;top:1275.00px;" width="24.00" height="23.00" viewBox="0 0 24 23" preserveAspectRatio="none"><path d="M1.5 3 L9 1.5 L22.5 15 L15 22 L1.5 9 Z" fill="#555"/><circle cx="6" cy="6.5" r="1.8" fill="#ddd"/></svg>
<svg style="left:665.00px;top:1275.00px;" width="22.00" height="21.00" viewBox="0 0 22 21" preserveAspectRatio="none"><polygon points="11,0 14,7.5 22,8 15.8,13 18,21 11,16.5 4,21 6.2,13 0,8 8,7.5" fill="#8e8e8e"/></svg>
<svg style="left:708.50px;top:1273.50px;" width="30.00" height="25.00" viewBox="0 0 30 25" preserveAspectRatio="none"><path d="M0.9 12.3 Q14 -3.2 28.3 12.1 Q15 27 0.9 12.3Z" fill="none" stroke="#444" stroke-width="2"/><circle cx="14.5" cy="11.6" r="5" fill="#444"/><path d="M3 21.6 L24 0.8" stroke="#444" stroke-width="2.6"/></svg>
<span class="t" style="left:740.70px;top:1266.20px;font-size:17.4px;color:#1a1a1a;letter-spacing:-0.372px;">9</span>
<div style="left:226.00px;top:1303.00px;width:1.50px;height:665.00px;background:#8c8c8c;"></div>
<svg style="left:10.50px;top:1312.50px;" width="17.00" height="14.00" viewBox="0 0 10 8" preserveAspectRatio="none"><polygon points="0,0 10,0 5,8" fill="#7b7b7b"/></svg>
<svg style="left:35.00px;top:1305.00px;" width="28.00" height="27.00" viewBox="0 0 28 27" preserveAspectRatio="none"><polygon points="14,0.5 17.8,9.5 27.5,10.3 20,16.6 22.5,26 14,20.8 5.5,26 8,16.6 0.5,10.3 10.2,9.5" fill="#ffd21e" stroke="#e8b400" stroke-width="1"/><polygon points="14,4 16.5,10.5 12,10.8" fill="#fff3a0"/></svg>
<span class="t" style="left:69.00px;top:1299.05px;font-size:21.5px;font-weight:bold;color:#111;letter-spacing:0.611px;">Favorites</span>
<svg style="left:62.50px;top:1336.00px;" width="28.00" height="28.00" viewBox="0 0 28 28" preserveAspectRatio="none"><path d="M17 17 L25.5 25.5" stroke="#e9b50a" stroke-width="4.6" stroke-linecap="round"/><path d="M17 17 L25.5 25.5" stroke="#ffd83a" stroke-width="2.4" stroke-linecap="round"/><circle cx="11" cy="11" r="8.6" fill="none" stroke="#f3c515" stroke-width="3"/><circle cx="11" cy="11" r="8.6" fill="none" stroke="#ffe25a" stroke-width="1.2"/></svg>
<span class="t" style="left:96.00px;top:1330.25px;font-size:21.5px;color:#111;letter-spacing:0.659px;">All Materials</span>
<svg style="left:62.50px;top:1367.25px;" width="28.00" height="28.00" viewBox="0 0 28 28" preserveAspectRatio="none"><path d="M17 17 L25.5 25.5" stroke="#e9b50a" stroke-width="4.6" stroke-linecap="round"/><path d="M17 17 L25.5 25.5" stroke="#ffd83a" stroke-width="2.4" stroke-linecap="round"/><circle cx="11" cy="11" r="8.6" fill="none" stroke="#f3c515" stroke-width="3"/><circle cx="11" cy="11" r="8.6" fill="none" stroke="#ffe25a" stroke-width="1.2"/></svg>
<span class="t" style="left:96.00px;top:1361.50px;font-size:21.5px;color:#111;letter-spacing:0.757px;">All Models</span>
<svg style="left:62.50px;top:1398.50px;" width="28.00" height="28.00" viewBox="0 0 28 28" preserveAspectRatio="none"><path d="M17 17 L25.5 25.5" stroke="#e9b50a" stroke-width="4.6" stroke-linecap="round"/><path d="M17 17 L25.5 25.5" stroke="#ffd83a" stroke-width="2.4" stroke-linecap="round"/><circle cx="11" cy="11" r="8.6" fill="none" stroke="#f3c515" stroke-width="3"/><circle cx="11" cy="11" r="8.6" fill="none" stroke="#ffe25a" stroke-width="1.2"/></svg>
<span class="t" style="left:96.00px;top:1392.75px;font-size:21.5px;color:#111;letter-spacing:0.453px;">All Prefabs</span>
<div style="left:2.00px;top:1457.50px;width:224.00px;height:31.50px;background:#8f8f8f;"></div>
<svg style="left:10.50px;top:1466.50px;" width="17.00" height="14.00" viewBox="0 0 10 8" preserveAspectRatio="none"><polygon points="0,0 10,0 5,8" fill="#5a5a5a"/></svg>
<svg style="left:35.50px;top:1462.00px;" width="28.50" height="23.00" viewBox="0 0 28 23" preserveAspectRatio="none"><defs><linearGradient id="fg" x1="0" y1="0" x2="0" y2="1"><stop offset="0" stop-color="#7c8b96"/><stop offset="1" stop-color="#3f4d57"/></linearGradient></defs><path d="M1 4 Q1 1.2 3.5 1.2 L10 1.2 Q12 1.2 13 3 L25 3 Q27 3 27 5 L27 8 L1 8 Z" fill="#dcdcdc" stroke="#9a9a9a" stroke-width="0.8"/><rect x="0.6" y="5.5" width="26.8" height="17" rx="2" fill="url(#fg)"/></svg>
<span class="t" style="left:69.00px;top:1453.45px;font-size:21.5px;font-weight:bold;color:#fff;letter-spacing:-0.103px;">Assets</span>
<svg style="left:62.50px;top:1493.00px;" width="28.50" height="23.00" viewBox="0 0 28 23" preserveAspectRatio="none"><defs><linearGradient id="fg" x1="0" y1="0" x2="0" y2="1"><stop offset="0" stop-color="#7c8b96"/><stop offset="1" stop-color="#3f4d57"/></linearGradient></defs><path d="M1 4 Q1 1.2 3.5 1.2 L10 1.2 Q12 1.2 13 3 L25 3 Q27 3 27 5 L27 8 L1 8 Z" fill="#dcdcdc" stroke="#9a9a9a" stroke-width="0.8"/><rect x="0.6" y="5.5" width="26.8" height="17" rx="2" fill="url(#fg)"/></svg>
<span class="t" style="left:96.00px;top:1484.75px;font-size:21.5px;color:#111;letter-spacing:-0.544px;">Scenes</span>
<svg style="left:11.50px;top:1527.20px;" width="14.00" height="17.00" viewBox="0 0 8 10" preserveAspectRatio="none"><polygon points="0,0 8,5 0,10" fill="#7b7b7b"/></svg>
<svg style="left:35.50px;top:1524.50px;" width="28.50" height="23.00" viewBox="0 0 28 23" preserveAspectRatio="none"><defs><linearGradient id="fg" x1="0" y1="0" x2="0" y2="1"><stop offset="0" stop-color="#7c8b96"/><stop offset="1" stop-color="#3f4d57"/></linearGradient></defs><path d="M1 4 Q1 1.2 3.5 1.2 L10 1.2 Q12 1.2 13 3 L25 3 Q27 3 27 5 L27 8 L1 8 Z" fill="#dcdcdc" stroke="#9a9a9a" stroke-width="0.8"/><rect x="0.6" y="5.5" width="26.8" height="17" rx="2" fill="url(#fg)"/></svg>
<span class="t" style="left:69.00px;top:1515.95px;font-size:21.5px;font-weight:bold;color:#111;letter-spacing:0.469px;">Packages</span>
<div style="left:227.50px;top:1303.00px;width:540.50px;height:34.00px;background:#dedede;border-bottom:1.5px solid #a0a0a0;"></div>
<span class="t" style="left:239.00px;top:1300.75px;font-size:21.5px;font-weight:bold;color:#111;letter-spacing:0.097px;">Assets</span>
<svg style="left:259.50px;top:1343.00px;" width="28.50" height="23.00" viewBox="0 0 28 23" preserveAspectRatio="none"><defs><linearGradient id="fg" x1="0" y1="0" x2="0" y2="1"><stop offset="0" stop-color="#7c8b96"/><stop offset="1" stop-color="#3f4d57"/></linearGradient></defs><path d="M1 4 Q1 1.2 3.5 1.2 L10 1.2 Q12 1.2 13 3 L25 3 Q27 3 27 5 L27 8 L1 8 Z" fill="#dcdcdc" stroke="#9a9a9a" stroke-width="0.8"/><rect x="0.6" y="5.5" width="26.8" height="17" rx="2" fill="url(#fg)"/></svg>
<span class="t" style="left:293.00px;top:1335.05px;font-size:21.5px;color:#111;letter-spacing:-0.444px;">Scenes</span>
<div style="left:227.50px;top:1938.50px;width:540.50px;height:29.00px;background:#dedede;border-top:1.5px solid #9a9a9a;"></div>
<div style="left:640.00px;top:1950.50px;width:101.00px;height:7.00px;background:linear-gradient(#8a8a8a,#bcbcbc);border-radius:4px;"></div>
<div style="left:632.00px;top:1944.50px;width:18.50px;height:18.50px;background:linear-gradient(#fbfbfb,#cdcdcd);border:1.5px solid #777;border-radius:50%;"></div>
<div style="left:774.00px;top:1268.50px;width:541.00px;height:699.50px;background:#c2c2c2;border-left:1.7px solid #8a8a8a;border-top:1.7px solid #8a8a8a;border-right:2px solid #8a8a8a;"></div>
<div style="left:775.70px;top:1270.20px;width:537.30px;height:1.90px;background:#e2e2e2;"></div>
<div style="left:775.70px;top:1272.10px;width:509.00px;height:1.80px;background:#6e6e6e;"></div>
<div style="left:775.70px;top:1273.80px;width:509.30px;height:661.70px;overflow:hidden;"><div style="left:-775.70px;top:-1273.80px;width:1855px;height:1999px;">
<div style="left:776.00px;top:1273.50px;width:509.00px;height:88.80px;background:linear-gradient(#e4e4e4,#dadada);border-bottom:1.5px solid #8a8a8a;"></div>
<svg style="left:786.50px;top:1285.50px;opacity:1;" width="49.00" height="49.00" viewBox="0 0 28 28" preserveAspectRatio="none"><defs><linearGradient id="cl" x1="0" y1="0" x2="0" y2="1"><stop offset="0" stop-color="#ececec"/><stop offset="1" stop-color="#d6d6d6"/></linearGradient><linearGradient id="cr" x1="0" y1="0" x2="0" y2="1"><stop offset="0" stop-color="#c4c4c4"/><stop offset="1" stop-color="#a0a0a0"/></linearGradient></defs><polygon points="14,2.5 26,7.5 14,12.5 2,7.5" fill="#f3f3f3"/><polygon points="2,7.5 14,12.5 14,26.5 2,20.5" fill="url(#cl)"/><polygon points="26,7.5 14,12.5 14,26.5 26,20.5" fill="url(#cr)"/><polygon points="14,2.5 26,7.5 26,20.5 14,26.5 2,20.5 2,7.5" fill="none" stroke="#bdbdbd" stroke-width="0.5" stroke-opacity="0.7"/></svg>
<svg style="left:792.50px;top:1321.00px;" width="15.00" height="8.00" viewBox="0 0 10 6" preserveAspectRatio="none"><polygon points="0,0 10,0 5,6" fill="#222"/></svg>
<div class="cbc" style="left:858.00px;top:1292.50px;width:23.00px;height:22.00px;"></div>
<svg style="left:858.00px;top:1290.50px;" width="27.00" height="25.00" viewBox="0 0 27 25" preserveAspectRatio="none"><path d="M4.2 12.6 L10.6 20.6 L23.6 3" fill="none" stroke="#000" stroke-width="3.3" stroke-linejoin="miter"/></svg>
<div class="fld" style="left:893.50px;top:1288.50px;width:253.00px;height:29.80px;"></div>
<div style="left:900.00px;top:1303.10px;width:20.00px;height:1.60px;background:#909090;"></div>
<div class="cb" style="left:1155.00px;top:1293.00px;width:23.00px;height:22.00px;"></div>
<span class="t" style="left:1185.00px;top:1282.75px;font-size:21.5px;color:#111;letter-spacing:0.144px;">Static</span>
<svg style="left:1253.50px;top:1297.50px;" width="18.00" height="9.00" viewBox="0 0 10 6" preserveAspectRatio="none"><polygon points="0,0 10,0 5,6" fill="#222"/></svg>
<span class="t" style="left:844.50px;top:1322.25px;font-size:21.5px;color:#111;letter-spacing:1.414px;">Tag</span>
<div class="pop" style="left:892.60px;top:1327.70px;width:159.40px;height:27.50px;"></div>
<span class="t" style="left:904.60px;top:1321.95px;font-size:17.4px;color:#1a1a1a;letter-spacing:0.625px;">Untagged</span>
<svg style="left:1034.25px;top:1334.70px;" width="7.50" height="13.50" viewBox="0 0 8 14" preserveAspectRatio="none"><polygon points="4,0 8,5.5 0,5.5" fill="#222"/><polygon points="0,8.5 8,8.5 4,14" fill="#222"/></svg>
<span class="t" style="left:1064.00px;top:1322.25px;font-size:21.5px;color:#111;letter-spacing:0.051px;">Layer</span>
<div class="pop" style="left:1130.00px;top:1327.70px;width:141.50px;height:27.50px;"></div>
<span class="t" style="left:1142.00px;top:1321.95px;font-size:17.2px;color:#1a1a1a;letter-spacing:-0.188px;">UI</span>
<svg style="left:1253.75px;top:1334.70px;" width="7.50" height="13.50" viewBox="0 0 8 14" preserveAspectRatio="none"><polygon points="4,0 8,5.5 0,5.5" fill="#222"/><polygon points="0,8.5 8,8.5 4,14" fill="#222"/></svg>
<svg style="left:786.25px;top:1376.50px;" width="16.50" height="14.00" viewBox="0 0 10 8" preserveAspectRatio="none"><polygon points="0,0 10,0 5,8" fill="#7b7b7b"/></svg>
<svg style="left:807.00px;top:1367.00px;" width="32.00" height="32.00" viewBox="0 0 32 32" preserveAspectRatio="none"><g fill="#f0f0f0" stroke="#999" stroke-width="1"><polygon points="1,7 10,0.5 13.5,13"/><polygon points="31,7 22,0.5 18.5,13"/><polygon points="1,25 10,31.5 13.5,19"/><polygon points="31,25 22,31.5 18.5,19"/></g></svg>
<span class="t" style="left:874.30px;top:1363.55px;font-size:21.5px;font-weight:bold;color:#111;letter-spacing:0.791px;">Rect Transform</span>
<svg style="left:1182.20px;top:1368.90px;" width="26.00" height="27.00" viewBox="0 0 26 27" preserveAspectRatio="none"><defs><linearGradient id="hb" x1="0" y1="0" x2="0.6" y2="1"><stop offset="0" stop-color="#86a5cf"/><stop offset="0.5" stop-color="#5d80b3"/><stop offset="1" stop-color="#3a5a8e"/></linearGradient></defs><path d="M0.5 2.2 L21.5 0.8 L24.8 2 L24.8 24.2 L21.5 26.6 L0.5 24.2 Z" fill="#27406b"/><rect x="4" y="2" width="20.6" height="22.6" fill="url(#hb)"/><path d="M4.3 2.6 H24.2 V24" fill="none" stroke="#e9eef6" stroke-width="1.3"/><path d="M2.2 2.4 V24.4" stroke="#4a6799" stroke-width="1.4"/><text x="13.2" y="19.6" font-family="Liberation Sans" font-size="14" fill="#e4ecf8" text-anchor="middle">?</text></svg>
<svg style="left:1221.30px;top:1370.50px;" width="20.00" height="23.00" viewBox="0 0 20 23" preserveAspectRatio="none"><g fill="#2e2e2e"><rect x="0.4" y="5" width="13" height="2.5"/><rect x="15.9" y="0" width="3.8" height="11"/><rect x="0.4" y="16.8" width="4.8" height="2.5"/><rect x="8.8" y="12.2" width="4.2" height="10.8"/><rect x="15.9" y="16.8" width="3.8" height="2.5"/></g></svg>
<svg style="left:1255.00px;top:1371.50px;" width="26.00" height="24.00" viewBox="0 0 26 24" preserveAspectRatio="none"><rect x="7.6" y="0" width="4.2" height="19.4" transform="rotate(0 9.7 9.7)" fill="#333"/><rect x="7.6" y="0" width="4.2" height="19.4" transform="rotate(45 9.7 9.7)" fill="#333"/><rect x="7.6" y="0" width="4.2" height="19.4" transform="rotate(90 9.7 9.7)" fill="#333"/><rect x="7.6" y="0" width="4.2" height="19.4" transform="rotate(135 9.7 9.7)" fill="#333"/><circle cx="9.7" cy="9.7" r="6.9" fill="#333"/><circle cx="9.7" cy="9.7" r="3.1" fill="#c6c6c6"/><polygon points="19.3,13.5 26,13.5 22.6,19.5" fill="#333"/></svg>
<span class="t" style="left:834.00px;top:1395.20px;font-size:17.4px;color:#111;letter-spacing:1.214px;">right</span>
<div style="left:807.40px;top:1429.00px;width:95.60px;height:94.20px;background:#d4d4d4;border:1.5px solid #8c8c8c;"></div>
<div style="left:821.00px;top:1442.50px;width:68.50px;height:67.50px;background:#dcdcdc;border:1.5px solid #9a9a9a;"></div>
<div style="left:838.50px;top:1460.00px;width:33.50px;height:33.00px;background:#dedede;border:2px solid #3a3a3a;"></div>
<div style="left:887.70px;top:1442.50px;width:1.80px;height:67.50px;background:#d8434a;"></div>
<div style="left:821.00px;top:1508.50px;width:68.00px;height:1.80px;background:#d8434a;"></div>
<div style="left:885.50px;top:1506.00px;width:6.00px;height:6.00px;background:#a86a10;"></div>
<div style="left:784.00px;top:1436.50px;width:20.00px;height:76.00px;"><span class="t" style="left:-29px;top:18px;width:78px;text-align:center;font-size:17.4px;letter-spacing:0.75px;color:#111;transform:rotate(-90deg);">bottom</span></div>
<span class="t" style="left:934.40px;top:1394.25px;font-size:21.5px;color:#111;letter-spacing:-0.469px;">Pos X</span>
<span class="t" style="left:1050.80px;top:1394.25px;font-size:21.5px;color:#111;letter-spacing:-0.421px;">Pos Y</span>
<span class="t" style="left:1166.50px;top:1394.25px;font-size:21.5px;color:#111;letter-spacing:-0.389px;">Pos Z</span>
<div class="fld" style="left:931.90px;top:1430.70px;width:111.68px;height:29.80px;"></div>
<div style="left:938.40px;top:1445.30px;width:20.00px;height:1.60px;background:#909090;"></div>
<div class="fld" style="left:1048.30px;top:1430.70px;width:112.01px;height:29.80px;"></div>
<span class="t" style="left:1055.60px;top:1426.15px;font-size:21.5px;color:#000;letter-spacing:1.297px;">79.81</span>
<div class="fld" style="left:1163.80px;top:1430.70px;width:112.00px;height:29.80px;"></div>
<span class="t" style="left:1171.10px;top:1426.15px;font-size:21.5px;color:#000;letter-spacing:-0.969px;">0</span>
<span class="t" style="left:933.90px;top:1457.25px;font-size:21.5px;color:#111;letter-spacing:0.783px;">Width</span>
<span class="t" style="left:1050.30px;top:1457.25px;font-size:21.5px;color:#111;letter-spacing:1.109px;">Height</span>
<div class="fld" style="left:931.90px;top:1493.70px;width:111.68px;height:29.80px;"></div>
<span class="t" style="left:939.20px;top:1489.15px;font-size:21.5px;color:#000;letter-spacing:1.062px;">160</span>
<div class="fld" style="left:1048.30px;top:1493.70px;width:112.01px;height:29.80px;"></div>
<span class="t" style="left:1055.60px;top:1489.15px;font-size:21.5px;color:#000;letter-spacing:1.078px;">30</span>
<div class="btn" style="left:1174.70px;top:1490.10px;width:100.80px;height:33.70px;"><div style="left:50px;top:0;width:1.5px;height:33px;background:#555;"></div></div>
<svg style="left:1190.00px;top:1497.50px;" width="20.00" height="19.00" viewBox="0 0 20 19" preserveAspectRatio="none"><rect x="1.2" y="1.2" width="17.6" height="16.6" fill="none" stroke="#222" stroke-width="2.2" stroke-dasharray="5.2 3.4" stroke-dashoffset="2.6"/></svg>
<span class="t" style="left:1244.60px;top:1486.32px;font-size:19.5px;color:#222;">R</span>
<svg style="left:784.30px;top:1534.50px;" width="14.00" height="17.00" viewBox="0 0 8 10" preserveAspectRatio="none"><polygon points="0,0 8,5 0,10" fill="#7b7b7b"/></svg>
<span class="t" style="left:805.70px;top:1523.55px;font-size:21.5px;color:#111;letter-spacing:0.871px;">Anchors</span>
<div style="left:936.40px;top:1542.50px;width:19.60px;height:1.60px;background:#8a8a8a;"></div>
<span class="t" style="left:805.70px;top:1559.25px;font-size:21.5px;color:#111;letter-spacing:0.297px;">Pivot</span>
<span class="t" style="left:934.10px;top:1559.25px;font-size:21.5px;color:#111;letter-spacing:-1.544px;">X</span>
<div class="fld" style="left:957.59px;top:1563.80px;width:86.16px;height:29.80px;"></div>
<div style="left:964.09px;top:1578.40px;width:20.00px;height:1.60px;background:#909090;"></div>
<span class="t" style="left:1051.30px;top:1559.25px;font-size:21.5px;color:#111;letter-spacing:-2.344px;">Y</span>
<div class="fld" style="left:1073.67px;top:1563.80px;width:86.76px;height:29.80px;"></div>
<span class="t" style="left:1080.97px;top:1559.25px;font-size:21.5px;color:#000;letter-spacing:-0.969px;">0</span>
<span class="t" style="left:805.70px;top:1609.75px;font-size:21.5px;color:#111;letter-spacing:0.815px;">Rotation</span>
<span class="t" style="left:934.10px;top:1609.75px;font-size:21.5px;color:#111;letter-spacing:-1.544px;">X</span>
<div class="fld" style="left:957.59px;top:1614.30px;width:86.16px;height:29.80px;"></div>
<span class="t" style="left:964.89px;top:1609.75px;font-size:21.5px;color:#000;letter-spacing:-0.969px;">0</span>
<span class="t" style="left:1051.30px;top:1609.75px;font-size:21.5px;color:#111;letter-spacing:-2.344px;">Y</span>
<div class="fld" style="left:1073.67px;top:1614.30px;width:86.76px;height:29.80px;"></div>
<span class="t" style="left:1080.97px;top:1609.75px;font-size:21.5px;color:#000;letter-spacing:-0.969px;">0</span>
<span class="t" style="left:1166.00px;top:1609.75px;font-size:21.5px;color:#111;letter-spacing:-1.841px;">Z</span>
<div class="fld" style="left:1189.00px;top:1614.30px;width:86.80px;height:29.80px;"></div>
<span class="t" style="left:1196.30px;top:1609.75px;font-size:21.5px;color:#000;letter-spacing:-0.969px;">0</span>
<span class="t" style="left:805.70px;top:1644.55px;font-size:21.5px;color:#111;letter-spacing:-0.749px;">Scale</span>
<span class="t" style="left:934.10px;top:1644.55px;font-size:21.5px;color:#111;letter-spacing:-1.544px;">X</span>
<div class="fld" style="left:957.59px;top:1649.10px;width:86.16px;height:29.80px;"></div>
<span class="t" style="left:964.89px;top:1644.55px;font-size:21.5px;color:#000;letter-spacing:-0.969px;">2</span>
<span class="t" style="left:1051.30px;top:1644.55px;font-size:21.5px;color:#111;letter-spacing:-2.344px;">Y</span>
<div class="fld" style="left:1073.67px;top:1649.10px;width:86.76px;height:29.80px;"></div>
<span class="t" style="left:1080.97px;top:1644.55px;font-size:21.5px;color:#000;letter-spacing:-0.969px;">2</span>
<span class="t" style="left:1166.00px;top:1644.55px;font-size:21.5px;color:#111;letter-spacing:-1.841px;">Z</span>
<div class="fld" style="left:1189.00px;top:1649.10px;width:86.80px;height:29.80px;"></div>
<span class="t" style="left:1196.30px;top:1644.55px;font-size:21.5px;color:#000;letter-spacing:-0.969px;">2</span>
<div class="sep" style="left:776.00px;top:1694.50px;width:509.00px;height:1.60px;"></div>
<svg style="left:786.25px;top:1708.00px;" width="16.50" height="14.00" viewBox="0 0 10 8" preserveAspectRatio="none"><polygon points="0,0 10,0 5,8" fill="#7b7b7b"/></svg>
<svg style="left:808.00px;top:1700.50px;" width="31.00" height="28.00" viewBox="0 0 31 28" preserveAspectRatio="none"><ellipse cx="15.5" cy="14" rx="14.5" ry="12.5" fill="#cdcdcd" stroke="#b0b0b0" stroke-width="1.4"/><ellipse cx="15.5" cy="14" rx="9" ry="8" fill="none" stroke="#a8a8a8" stroke-width="2"/><circle cx="15.5" cy="14" r="4" fill="#a0a0a0"/></svg>
<span class="t" style="left:874.30px;top:1695.05px;font-size:21.5px;font-weight:bold;color:#111;letter-spacing:0.623px;">Canvas Renderer</span>
<svg style="left:1182.20px;top:1700.40px;" width="26.00" height="27.00" viewBox="0 0 26 27" preserveAspectRatio="none"><defs><linearGradient id="hb" x1="0" y1="0" x2="0.6" y2="1"><stop offset="0" stop-color="#86a5cf"/><stop offset="0.5" stop-color="#5d80b3"/><stop offset="1" stop-color="#3a5a8e"/></linearGradient></defs><path d="M0.5 2.2 L21.5 0.8 L24.8 2 L24.8 24.2 L21.5 26.6 L0.5 24.2 Z" fill="#27406b"/><rect x="4" y="2" width="20.6" height="22.6" fill="url(#hb)"/><path d="M4.3 2.6 H24.2 V24" fill="none" stroke="#e9eef6" stroke-width="1.3"/><path d="M2.2 2.4 V24.4" stroke="#4a6799" stroke-width="1.4"/><text x="13.2" y="19.6" font-family="Liberation Sans" font-size="14" fill="#e4ecf8" text-anchor="middle">?</text></svg>
<svg style="left:1221.30px;top:1702.00px;" width="20.00" height="23.00" viewBox="0 0 20 23" preserveAspectRatio="none"><g fill="#2e2e2e"><rect x="0.4" y="5" width="13" height="2.5"/><rect x="15.9" y="0" width="3.8" height="11"/><rect x="0.4" y="16.8" width="4.8" height="2.5"/><rect x="8.8" y="12.2" width="4.2" height="10.8"/><rect x="15.9" y="16.8" width="3.8" height="2.5"/></g></svg>
<svg style="left:1255.00px;top:1703.00px;" width="26.00" height="24.00" viewBox="0 0 26 24" preserveAspectRatio="none"><rect x="7.6" y="0" width="4.2" height="19.4" transform="rotate(0 9.7 9.7)" fill="#333"/><rect x="7.6" y="0" width="4.2" height="19.4" transform="rotate(45 9.7 9.7)" fill="#333"/><rect x="7.6" y="0" width="4.2" height="19.4" transform="rotate(90 9.7 9.7)" fill="#333"/><rect x="7.6" y="0" width="4.2" height="19.4" transform="rotate(135 9.7 9.7)" fill="#333"/><circle cx="9.7" cy="9.7" r="6.9" fill="#333"/><circle cx="9.7" cy="9.7" r="3.1" fill="#c6c6c6"/><polygon points="19.3,13.5 26,13.5 22.6,19.5" fill="#333"/></svg>
<span class="t" style="left:805.70px;top:1726.65px;font-size:21.5px;color:#111;letter-spacing:0.815px;">Cull Transparent Mesh</span>
<div class="cb" style="left:1040.30px;top:1736.00px;width:22.50px;height:21.50px;"></div>
<div class="sep" style="left:776.00px;top:1776.50px;width:509.00px;height:1.60px;"></div>
<svg style="left:786.25px;top:1789.70px;" width="16.50" height="14.00" viewBox="0 0 10 8" preserveAspectRatio="none"><polygon points="0,0 10,0 5,8" fill="#7b7b7b"/></svg>
<svg style="left:808.00px;top:1781.20px;" width="30.00" height="30.00" viewBox="0 0 30 30" preserveAspectRatio="none"><rect x="1" y="1" width="28" height="28" fill="#e6e6e6"/><rect x="1" y="1" width="14" height="14" fill="#4a4a4a"/><rect x="15" y="15" width="14" height="14" fill="#4a4a4a"/><rect x="1" y="1" width="28" height="28" fill="none" stroke="#f59a1c" stroke-width="2"/><circle cx="14" cy="14" r="5.6" fill="none" stroke="#f59a1c" stroke-width="2"/></svg>
<div class="cbc" style="left:844.70px;top:1785.50px;width:23.00px;height:21.50px;"></div>
<svg style="left:844.70px;top:1783.50px;" width="27.00" height="25.00" viewBox="0 0 27 25" preserveAspectRatio="none"><path d="M4.2 12.6 L10.6 20.6 L23.6 3" fill="none" stroke="#000" stroke-width="3.3" stroke-linejoin="miter"/></svg>
<span class="t" style="left:874.30px;top:1776.75px;font-size:21.5px;font-weight:bold;color:#111;letter-spacing:0.717px;">Image (Script)</span>
<svg style="left:1182.20px;top:1782.10px;" width="26.00" height="27.00" viewBox="0 0 26 27" preserveAspectRatio="none"><defs><linearGradient id="hb" x1="0" y1="0" x2="0.6" y2="1"><stop offset="0" stop-color="#86a5cf"/><stop offset="0.5" stop-color="#5d80b3"/><stop offset="1" stop-color="#3a5a8e"/></linearGradient></defs><path d="M0.5 2.2 L21.5 0.8 L24.8 2 L24.8 24.2 L21.5 26.6 L0.5 24.2 Z" fill="#27406b"/><rect x="4" y="2" width="20.6" height="22.6" fill="url(#hb)"/><path d="M4.3 2.6 H24.2 V24" fill="none" stroke="#e9eef6" stroke-width="1.3"/><path d="M2.2 2.4 V24.4" stroke="#4a6799" stroke-width="1.4"/><text x="13.2" y="19.6" font-family="Liberation Sans" font-size="14" fill="#e4ecf8" text-anchor="middle">?</text></svg>
<svg style="left:1221.30px;top:1783.70px;" width="20.00" height="23.00" viewBox="0 0 20 23" preserveAspectRatio="none"><g fill="#2e2e2e"><rect x="0.4" y="5" width="13" height="2.5"/><rect x="15.9" y="0" width="3.8" height="11"/><rect x="0.4" y="16.8" width="4.8" height="2.5"/><rect x="8.8" y="12.2" width="4.2" height="10.8"/><rect x="15.9" y="16.8" width="3.8" height="2.5"/></g></svg>
<svg style="left:1255.00px;top:1784.70px;" width="26.00" height="24.00" viewBox="0 0 26 24" preserveAspectRatio="none"><rect x="7.6" y="0" width="4.2" height="19.4" transform="rotate(0 9.7 9.7)" fill="#333"/><rect x="7.6" y="0" width="4.2" height="19.4" transform="rotate(45 9.7 9.7)" fill="#333"/><rect x="7.6" y="0" width="4.2" height="19.4" transform="rotate(90 9.7 9.7)" fill="#333"/><rect x="7.6" y="0" width="4.2" height="19.4" transform="rotate(135 9.7 9.7)" fill="#333"/><circle cx="9.7" cy="9.7" r="6.9" fill="#333"/><circle cx="9.7" cy="9.7" r="3.1" fill="#c6c6c6"/><polygon points="19.3,13.5 26,13.5 22.6,19.5" fill="#333"/></svg>
<span class="t" style="left:805.70px;top:1808.75px;font-size:21.5px;color:#111;letter-spacing:0.522px;">Source Image</span>
<div class="fld" style="left:1038.30px;top:1813.70px;width:202.70px;height:29.80px;"></div>
<svg style="left:1043.00px;top:1816.50px;" width="25.00" height="24.00" viewBox="0 0 25 24" preserveAspectRatio="none"><rect x="3" y="3" width="19" height="18" fill="#eaeaea" stroke="#9fb8d0" stroke-width="1.6"/><g fill="#7fa5c8"><circle cx="3" cy="3" r="2.6"/><circle cx="22" cy="3" r="2.6"/><circle cx="3" cy="21" r="2.6"/><circle cx="22" cy="21" r="2.6"/></g><circle cx="12.5" cy="12" r="3.6" fill="none" stroke="#6f93b8" stroke-width="1.5"/><circle cx="12.5" cy="12" r="1.2" fill="#6f93b8"/></svg>
<span class="t" style="left:1069.50px;top:1808.75px;font-size:21.5px;color:#111;letter-spacing:0.175px;">UISprite</span>
<svg style="left:1255.40px;top:1820.30px;" width="16.00" height="16.00" viewBox="0 0 16 16" preserveAspectRatio="none"><circle cx="8" cy="8" r="6.1" fill="none" stroke="#2e2e2e" stroke-width="1.9"/><circle cx="8" cy="8" r="1.4" fill="#2e2e2e"/></svg>
<span class="t" style="left:805.70px;top:1844.55px;font-size:21.5px;color:#111;letter-spacing:1.102px;">Color</span>
<div style="left:1038.30px;top:1849.10px;width:202.70px;height:29.80px;background:#fff;border:2px solid #6f6f6f;border-top-color:#5a5a5a;box-shadow:inset 0 0 0 1px rgba(255,255,255,.35);"></div>
<div style="left:1040.30px;top:1872.50px;width:198.70px;height:4.40px;background:#fff;"></div>
<svg style="left:1247.50px;top:1850.50px;" width="27.00" height="28.00" viewBox="0 0 27 28" preserveAspectRatio="none"><path d="M0.8 27.2 L2.2 23.2 L14.2 11.2 L16.8 13.8 L4.8 25.8 Z" fill="#f4f4f4" stroke="#3a3a3a" stroke-width="1.4" stroke-linejoin="round"/><path d="M12.2 8.6 L19.4 15.8" stroke="#2e2e2e" stroke-width="3" stroke-linecap="round"/><path d="M17.4 10.8 L23.6 4.4" stroke="#2e2e2e" stroke-width="6.2" stroke-linecap="round"/><path d="M19 8.2 L23 4.2" stroke="#d8d8d8" stroke-width="1.6" stroke-linecap="round"/></svg>
<span class="t" style="left:805.70px;top:1879.55px;font-size:21.5px;color:#111;letter-spacing:0.619px;">Material</span>
<div class="fld" style="left:1038.30px;top:1884.50px;width:202.70px;height:29.80px;"></div>
<span class="t" style="left:1045.60px;top:1879.95px;font-size:21.5px;color:#000;letter-spacing:0.523px;">None (Material)</span>
<svg style="left:1255.40px;top:1891.00px;" width="16.00" height="16.00" viewBox="0 0 16 16" preserveAspectRatio="none"><circle cx="8" cy="8" r="6.1" fill="none" stroke="#2e2e2e" stroke-width="1.9"/><circle cx="8" cy="8" r="1.4" fill="#2e2e2e"/></svg>
<span class="t" style="left:805.70px;top:1915.05px;font-size:21.5px;color:#111;letter-spacing:0.637px;">Raycast Target</span>
<div class="cbc" style="left:1040.30px;top:1924.00px;width:22.50px;height:21.50px;"></div>
<svg style="left:1040.30px;top:1922.00px;" width="27.00" height="25.00" viewBox="0 0 27 25" preserveAspectRatio="none"><path d="M4.2 12.6 L10.6 20.6 L23.6 3" fill="none" stroke="#000" stroke-width="3.3" stroke-linejoin="miter"/></svg>
<span class="t" style="left:813.80px;top:1949.75px;font-size:21.5px;color:#111;letter-spacing:0.872px;">Image Type</span>
<div class="pop" style="left:1046.20px;top:1955.50px;width:221.50px;height:27.50px;"></div>
<span class="t" style="left:1058.20px;top:1949.75px;font-size:17.4px;color:#1a1a1a;letter-spacing:0.065px;">Sliced</span>
<svg style="left:1249.95px;top:1962.50px;" width="7.50" height="13.50" viewBox="0 0 8 14" preserveAspectRatio="none"><polygon points="4,0 8,5.5 0,5.5" fill="#222"/><polygon points="0,8.5 8,8.5 4,14" fill="#222"/></svg>
<span class="t" style="left:843.00px;top:1985.05px;font-size:21.5px;color:#111;letter-spacing:0.523px;">Fill Center</span>
<div class="cbc" style="left:1048.20px;top:1994.00px;width:22.50px;height:21.50px;"></div>
<svg style="left:1048.20px;top:1992.00px;" width="27.00" height="25.00" viewBox="0 0 27 25" preserveAspectRatio="none"><path d="M4.2 12.6 L10.6 20.6 L23.6 3" fill="none" stroke="#000" stroke-width="3.3" stroke-linejoin="miter"/></svg>
<span class="t" style="left:843.00px;top:2020.05px;font-size:21.5px;color:#111;letter-spacing:0.497px;">Pixels Per Unit Multi</span>
<div class="fld" style="left:1046.20px;top:2025.10px;width:221.50px;height:29.80px;"></div>
<span class="t" style="left:1053.50px;top:2020.55px;font-size:21.5px;color:#000;letter-spacing:-1.969px;">1</span>
<div class="sep" style="left:776.00px;top:2069.80px;width:509.00px;height:1.60px;"></div>
<svg style="left:786.25px;top:2083.40px;" width="16.50" height="14.00" viewBox="0 0 10 8" preserveAspectRatio="none"><polygon points="0,0 10,0 5,8" fill="#7b7b7b"/></svg>
<svg style="left:808.00px;top:2074.90px;" width="30.00" height="30.00" viewBox="0 0 30 30" preserveAspectRatio="none"><circle cx="15" cy="15" r="13.6" fill="#ececec" stroke="#f59a1c" stroke-width="2.2"/><text x="15" y="20" font-family="Liberation Sans" font-size="13" fill="#8a8a8a" text-anchor="middle">OK</text></svg>
<div class="cbc" style="left:844.70px;top:2079.20px;width:23.00px;height:21.50px;"></div>
<svg style="left:844.70px;top:2077.20px;" width="27.00" height="25.00" viewBox="0 0 27 25" preserveAspectRatio="none"><path d="M4.2 12.6 L10.6 20.6 L23.6 3" fill="none" stroke="#000" stroke-width="3.3" stroke-linejoin="miter"/></svg>
<span class="t" style="left:874.30px;top:2070.45px;font-size:21.5px;font-weight:bold;color:#111;letter-spacing:0.517px;">Button (Script)</span>
<svg style="left:1182.20px;top:2075.80px;" width="26.00" height="27.00" viewBox="0 0 26 27" preserveAspectRatio="none"><defs><linearGradient id="hb" x1="0" y1="0" x2="0.6" y2="1"><stop offset="0" stop-color="#86a5cf"/><stop offset="0.5" stop-color="#5d80b3"/><stop offset="1" stop-color="#3a5a8e"/></linearGradient></defs><path d="M0.5 2.2 L21.5 0.8 L24.8 2 L24.8 24.2 L21.5 26.6 L0.5 24.2 Z" fill="#27406b"/><rect x="4" y="2" width="20.6" height="22.6" fill="url(#hb)"/><path d="M4.3 2.6 H24.2 V24" fill="none" stroke="#e9eef6" stroke-width="1.3"/><path d="M2.2 2.4 V24.4" stroke="#4a6799" stroke-width="1.4"/><text x="13.2" y="19.6" font-family="Liberation Sans" font-size="14" fill="#e4ecf8" text-anchor="middle">?</text></svg>
<svg style="left:1221.30px;top:2077.40px;" width="20.00" height="23.00" viewBox="0 0 20 23" preserveAspectRatio="none"><g fill="#2e2e2e"><rect x="0.4" y="5" width="13" height="2.5"/><rect x="15.9" y="0" width="3.8" height="11"/><rect x="0.4" y="16.8" width="4.8" height="2.5"/><rect x="8.8" y="12.2" width="4.2" height="10.8"/><rect x="15.9" y="16.8" width="3.8" height="2.5"/></g></svg>
<svg style="left:1255.00px;top:2078.40px;" width="26.00" height="24.00" viewBox="0 0 26 24" preserveAspectRatio="none"><rect x="7.6" y="0" width="4.2" height="19.4" transform="rotate(0 9.7 9.7)" fill="#333"/><rect x="7.6" y="0" width="4.2" height="19.4" transform="rotate(45 9.7 9.7)" fill="#333"/><rect x="7.6" y="0" width="4.2" height="19.4" transform="rotate(90 9.7 9.7)" fill="#333"/><rect x="7.6" y="0" width="4.2" height="19.4" transform="rotate(135 9.7 9.7)" fill="#333"/><circle cx="9.7" cy="9.7" r="6.9" fill="#333"/><circle cx="9.7" cy="9.7" r="3.1" fill="#c6c6c6"/><polygon points="19.3,13.5 26,13.5 22.6,19.5" fill="#333"/></svg>
<span class="t" style="left:805.70px;top:2102.35px;font-size:21.5px;color:#111;letter-spacing:0.704px;">Interactable</span>
<div class="cbc" style="left:1040.30px;top:2111.50px;width:22.50px;height:21.50px;"></div>
<svg style="left:1040.30px;top:2109.50px;" width="27.00" height="25.00" viewBox="0 0 27 25" preserveAspectRatio="none"><path d="M4.2 12.6 L10.6 20.6 L23.6 3" fill="none" stroke="#000" stroke-width="3.3" stroke-linejoin="miter"/></svg>
<span class="t" style="left:805.70px;top:2137.45px;font-size:21.5px;color:#111;letter-spacing:1.155px;">Transition</span>
<div class="pop" style="left:1038.30px;top:2142.80px;width:237.20px;height:27.50px;"></div>
<span class="t" style="left:1050.30px;top:2137.05px;font-size:17.4px;color:#1a1a1a;letter-spacing:0.953px;">Color Tint</span>
<svg style="left:1257.75px;top:2149.80px;" width="7.50" height="13.50" viewBox="0 0 8 14" preserveAspectRatio="none"><polygon points="4,0 8,5.5 0,5.5" fill="#222"/><polygon points="0,8.5 8,8.5 4,14" fill="#222"/></svg>
<span class="t" style="left:835.00px;top:2172.45px;font-size:21.5px;color:#111;letter-spacing:0.968px;">Target Graphic</span>
<div class="fld" style="left:1038.30px;top:2177.70px;width:202.70px;height:29.80px;"></div>
<div style="left:1044.80px;top:2192.30px;width:20.00px;height:1.60px;background:#909090;"></div>
<svg style="left:1255.40px;top:2183.90px;" width="16.00" height="16.00" viewBox="0 0 16 16" preserveAspectRatio="none"><circle cx="8" cy="8" r="6.1" fill="none" stroke="#2e2e2e" stroke-width="1.9"/><circle cx="8" cy="8" r="1.4" fill="#2e2e2e"/></svg>
<span class="t" style="left:835.00px;top:2207.55px;font-size:21.5px;color:#111;letter-spacing:1.096px;">Normal Color</span>
<div style="left:1038.30px;top:2212.10px;width:202.70px;height:29.80px;background:#fff;border:2px solid #6f6f6f;border-top-color:#5a5a5a;box-shadow:inset 0 0 0 1px rgba(255,255,255,.35);"></div>
<div style="left:1040.30px;top:2235.50px;width:198.70px;height:4.40px;background:#fff;"></div>
<svg style="left:1247.50px;top:2213.50px;" width="27.00" height="28.00" viewBox="0 0 27 28" preserveAspectRatio="none"><path d="M0.8 27.2 L2.2 23.2 L14.2 11.2 L16.8 13.8 L4.8 25.8 Z" fill="#f4f4f4" stroke="#3a3a3a" stroke-width="1.4" stroke-linejoin="round"/><path d="M12.2 8.6 L19.4 15.8" stroke="#2e2e2e" stroke-width="3" stroke-linecap="round"/><path d="M17.4 10.8 L23.6 4.4" stroke="#2e2e2e" stroke-width="6.2" stroke-linecap="round"/><path d="M19 8.2 L23 4.2" stroke="#d8d8d8" stroke-width="1.6" stroke-linecap="round"/></svg>
<span class="t" style="left:835.00px;top:2242.65px;font-size:21.5px;color:#111;letter-spacing:1.191px;">Highlighted Color</span>
<div style="left:1038.30px;top:2247.20px;width:202.70px;height:29.80px;background:#f5f5f5;border:2px solid #6f6f6f;border-top-color:#5a5a5a;box-shadow:inset 0 0 0 1px rgba(255,255,255,.35);"></div>
<div style="left:1040.30px;top:2270.60px;width:198.70px;height:4.40px;background:#fff;"></div>
<svg style="left:1247.50px;top:2248.60px;" width="27.00" height="28.00" viewBox="0 0 27 28" preserveAspectRatio="none"><path d="M0.8 27.2 L2.2 23.2 L14.2 11.2 L16.8 13.8 L4.8 25.8 Z" fill="#f4f4f4" stroke="#3a3a3a" stroke-width="1.4" stroke-linejoin="round"/><path d="M12.2 8.6 L19.4 15.8" stroke="#2e2e2e" stroke-width="3" stroke-linecap="round"/><path d="M17.4 10.8 L23.6 4.4" stroke="#2e2e2e" stroke-width="6.2" stroke-linecap="round"/><path d="M19 8.2 L23 4.2" stroke="#d8d8d8" stroke-width="1.6" stroke-linecap="round"/></svg>
<span class="t" style="left:835.00px;top:2277.65px;font-size:21.5px;color:#111;letter-spacing:0.480px;">Pressed Color</span>
<div style="left:1038.30px;top:2282.20px;width:202.70px;height:29.80px;background:#c8c8c8;border:2px solid #6f6f6f;border-top-color:#5a5a5a;box-shadow:inset 0 0 0 1px rgba(255,255,255,.35);"></div>
<div style="left:1040.30px;top:2305.60px;width:198.70px;height:4.40px;background:#fff;"></div>
<svg style="left:1247.50px;top:2283.60px;" width="27.00" height="28.00" viewBox="0 0 27 28" preserveAspectRatio="none"><path d="M0.8 27.2 L2.2 23.2 L14.2 11.2 L16.8 13.8 L4.8 25.8 Z" fill="#f4f4f4" stroke="#3a3a3a" stroke-width="1.4" stroke-linejoin="round"/><path d="M12.2 8.6 L19.4 15.8" stroke="#2e2e2e" stroke-width="3" stroke-linecap="round"/><path d="M17.4 10.8 L23.6 4.4" stroke="#2e2e2e" stroke-width="6.2" stroke-linecap="round"/><path d="M19 8.2 L23 4.2" stroke="#d8d8d8" stroke-width="1.6" stroke-linecap="round"/></svg>
<span class="t" style="left:835.00px;top:2312.75px;font-size:21.5px;color:#111;letter-spacing:0.513px;">Selected Color</span>
<div style="left:1038.30px;top:2317.30px;width:202.70px;height:29.80px;background:#f5f5f5;border:2px solid #6f6f6f;border-top-color:#5a5a5a;box-shadow:inset 0 0 0 1px rgba(255,255,255,.35);"></div>
<div style="left:1040.30px;top:2340.70px;width:198.70px;height:4.40px;background:#fff;"></div>
<svg style="left:1247.50px;top:2318.70px;" width="27.00" height="28.00" viewBox="0 0 27 28" preserveAspectRatio="none"><path d="M0.8 27.2 L2.2 23.2 L14.2 11.2 L16.8 13.8 L4.8 25.8 Z" fill="#f4f4f4" stroke="#3a3a3a" stroke-width="1.4" stroke-linejoin="round"/><path d="M12.2 8.6 L19.4 15.8" stroke="#2e2e2e" stroke-width="3" stroke-linecap="round"/><path d="M17.4 10.8 L23.6 4.4" stroke="#2e2e2e" stroke-width="6.2" stroke-linecap="round"/><path d="M19 8.2 L23 4.2" stroke="#d8d8d8" stroke-width="1.6" stroke-linecap="round"/></svg>
<span class="t" style="left:835.00px;top:2347.85px;font-size:21.5px;color:#111;letter-spacing:0.830px;">Disabled Color</span>
<div style="left:1038.30px;top:2352.40px;width:202.70px;height:29.80px;background:#c8c8c8;border:2px solid #6f6f6f;border-top-color:#5a5a5a;box-shadow:inset 0 0 0 1px rgba(255,255,255,.35);"></div>
<div style="left:1040.30px;top:2375.80px;width:99.35px;height:4.40px;background:#fff;"></div>
<div style="left:1139.65px;top:2375.80px;width:99.35px;height:4.40px;background:#000;"></div>
<svg style="left:1247.50px;top:2353.80px;" width="27.00" height="28.00" viewBox="0 0 27 28" preserveAspectRatio="none"><path d="M0.8 27.2 L2.2 23.2 L14.2 11.2 L16.8 13.8 L4.8 25.8 Z" fill="#f4f4f4" stroke="#3a3a3a" stroke-width="1.4" stroke-linejoin="round"/><path d="M12.2 8.6 L19.4 15.8" stroke="#2e2e2e" stroke-width="3" stroke-linecap="round"/><path d="M17.4 10.8 L23.6 4.4" stroke="#2e2e2e" stroke-width="6.2" stroke-linecap="round"/><path d="M19 8.2 L23 4.2" stroke="#d8d8d8" stroke-width="1.6" stroke-linecap="round"/></svg>
<span class="t" style="left:835.00px;top:2383.45px;font-size:21.5px;color:#111;letter-spacing:1.148px;">Color Multiplier</span>
<div style="left:1045.00px;top:2399.50px;width:124.00px;height:7.00px;background:linear-gradient(#8a8a8a,#bcbcbc);border-radius:4px;"></div>
<div style="left:1036.50px;top:2394.00px;width:18.00px;height:18.00px;background:linear-gradient(#fbfbfb,#cdcdcd);border:1.5px solid #777;border-radius:50%;"></div>
<div class="fld" style="left:1178.50px;top:2388.50px;width:97.00px;height:29.80px;"></div>
<span class="t" style="left:1185.80px;top:2383.95px;font-size:21.5px;color:#000;letter-spacing:-1.969px;">1</span>
<span class="t" style="left:835.00px;top:2418.55px;font-size:21.5px;color:#111;letter-spacing:0.712px;">Fade Duration</span>
<div class="fld" style="left:1038.30px;top:2423.70px;width:237.20px;height:29.80px;"></div>
<span class="t" style="left:1045.60px;top:2419.15px;font-size:21.5px;color:#000;letter-spacing:0.805px;">0.1</span>
<span class="t" style="left:805.70px;top:2469.25px;font-size:21.5px;color:#111;letter-spacing:0.823px;">Navigation</span>
<div class="pop" style="left:1038.30px;top:2474.80px;width:237.20px;height:27.50px;"></div>
<span class="t" style="left:1050.30px;top:2469.05px;font-size:17.4px;color:#1a1a1a;letter-spacing:1.084px;">Automatic</span>
<svg style="left:1257.75px;top:2481.80px;" width="7.50" height="13.50" viewBox="0 0 8 14" preserveAspectRatio="none"><polygon points="4,0 8,5.5 0,5.5" fill="#222"/><polygon points="0,8.5 8,8.5 4,14" fill="#222"/></svg>
<div class="pop" style="left:1038.30px;top:2514.20px;width:237.20px;height:29.20px;"></div>
<span class="t" style="left:1118.60px;top:2509.20px;font-size:17.4px;color:#1a1a1a;letter-spacing:0.550px;">Visualize</span>
<div style="left:805.70px;top:2565.30px;width:467.80px;height:130.00px;background:#a0a0a0;border-radius:5px;box-shadow:0 1.5px 2px rgba(0,0,0,.35);"></div>
<div style="left:805.70px;top:2565.30px;width:467.80px;height:36.50px;background:linear-gradient(#e6e6e6,#dadada);border-radius:5px 5px 0 0;"></div>
<div style="left:805.70px;top:2601.30px;width:467.80px;height:1.20px;background:#a6a6a6;"></div>
<div style="left:805.70px;top:2602.50px;width:467.80px;height:3.30px;background:#ececec;"></div>
<div style="left:805.70px;top:2687.50px;width:467.80px;height:8.00px;background:linear-gradient(#cfcfcf,#e4e4e4);border-radius:0 0 5px 5px;"></div>
<span class="t" style="left:819.70px;top:2561.95px;font-size:21.5px;color:#111;letter-spacing:0.507px;">On Click ()</span>
<div class="pop" style="left:815.90px;top:2613.50px;width:133.10px;height:27.20px;"></div>
<span class="t" style="left:827.00px;top:2607.60px;font-size:17.4px;color:#1a1a1a;letter-spacing:0.889px;">Runtime On</span>
<svg style="left:931.25px;top:2620.35px;" width="7.50" height="13.50" viewBox="0 0 8 14" preserveAspectRatio="none"><polygon points="4,0 8,5.5 0,5.5" fill="#222"/><polygon points="0,8.5 8,8.5 4,14" fill="#222"/></svg>
<div class="pop" style="left:960.00px;top:2613.50px;width:303.90px;height:27.20px;"></div>
<span class="t" style="left:972.00px;top:2607.60px;font-size:17.4px;color:#1a1a1a;letter-spacing:0.793px;">No Function</span>
<svg style="left:1246.15px;top:2620.35px;" width="7.50" height="13.50" viewBox="0 0 8 14" preserveAspectRatio="none"><polygon points="4,0 8,5.5 0,5.5" fill="#222"/><polygon points="0,8.5 8,8.5 4,14" fill="#222"/></svg>
<div style="left:815.90px;top:2648.50px;width:133.10px;height:30.40px;background:#d6d6d6;border:2px solid #787878;border-top-color:#666;"></div>
<div style="left:913.80px;top:2650.50px;width:33.20px;height:26.40px;background:linear-gradient(#e2e2e2,#d4d4d4);border-left:1.5px solid #8c8c8c;"></div>
<svg style="left:820.50px;top:2651.50px;opacity:0.75;" width="24.00" height="24.00" viewBox="0 0 28 28" preserveAspectRatio="none"><defs><linearGradient id="cl" x1="0" y1="0" x2="0" y2="1"><stop offset="0" stop-color="#ececec"/><stop offset="1" stop-color="#d6d6d6"/></linearGradient><linearGradient id="cr" x1="0" y1="0" x2="0" y2="1"><stop offset="0" stop-color="#c4c4c4"/><stop offset="1" stop-color="#a0a0a0"/></linearGradient></defs><polygon points="14,2.5 26,7.5 14,12.5 2,7.5" fill="#f3f3f3"/><polygon points="2,7.5 14,12.5 14,26.5 2,20.5" fill="url(#cl)"/><polygon points="26,7.5 14,12.5 14,26.5 26,20.5" fill="url(#cr)"/><polygon points="14,2.5 26,7.5 26,20.5 14,26.5 2,20.5 2,7.5" fill="none" stroke="#bdbdbd" stroke-width="0.5" stroke-opacity="0.7"/></svg>
<span class="t" style="left:846.60px;top:2644.05px;font-size:21.5px;color:#111;letter-spacing:0.648px;">Video</span>
<svg style="left:929.90px;top:2655.00px;" width="16.00" height="16.00" viewBox="0 0 16 16" preserveAspectRatio="none"><circle cx="8" cy="8" r="6.1" fill="none" stroke="#2e2e2e" stroke-width="1.9"/><circle cx="8" cy="8" r="1.4" fill="#2e2e2e"/></svg>
<div style="left:1166.50px;top:2695.40px;width:107.00px;height:29.50px;background:linear-gradient(#e0e0e0,#d4d4d4);border-radius:0 0 5px 5px;box-shadow:0 1.5px 2px rgba(0,0,0,.35);"></div>
<div style="left:1187.50px;top:2710.10px;width:16.00px;height:3.00px;background:#222;"></div>
<div style="left:1194.00px;top:2703.50px;width:3.00px;height:16.00px;background:#222;"></div>
<div style="left:1236.00px;top:2710.10px;width:16.00px;height:3.00px;background:#222;"></div>
<div class="sep" style="left:776.00px;top:2740.00px;width:509.00px;height:1.60px;"></div>
<div style="left:776.00px;top:2741.70px;width:509.00px;height:86.30px;background:linear-gradient(#dedede,#d8d8d8);"></div>
<div style="left:776.00px;top:2828.00px;width:509.00px;height:1.50px;background:#a8a8a8;"></div>
<div style="left:814.40px;top:2758.50px;width:48.60px;height:48.60px;background:#fff;"></div>
<svg style="left:787.25px;top:2803.00px;" width="14.50" height="17.00" viewBox="0 0 8 10" preserveAspectRatio="none"><polygon points="0,0 8,5 0,10" fill="#7b7b7b"/></svg>
<span class="t" style="left:886.00px;top:2746.37px;font-size:23.4px;color:#161616;letter-spacing:0.928px;">Default UI Material</span>
<svg style="left:1215.20px;top:2751.90px;" width="26.00" height="27.00" viewBox="0 0 26 27" preserveAspectRatio="none"><defs><linearGradient id="hb" x1="0" y1="0" x2="0.6" y2="1"><stop offset="0" stop-color="#86a5cf"/><stop offset="0.5" stop-color="#5d80b3"/><stop offset="1" stop-color="#3a5a8e"/></linearGradient></defs><path d="M0.5 2.2 L21.5 0.8 L24.8 2 L24.8 24.2 L21.5 26.6 L0.5 24.2 Z" fill="#27406b"/><rect x="4" y="2" width="20.6" height="22.6" fill="url(#hb)"/><path d="M4.3 2.6 H24.2 V24" fill="none" stroke="#e9eef6" stroke-width="1.3"/><path d="M2.2 2.4 V24.4" stroke="#4a6799" stroke-width="1.4"/><text x="13.2" y="19.6" font-family="Liberation Sans" font-size="14" fill="#e4ecf8" text-anchor="middle">?</text></svg>
<svg style="left:1253.60px;top:2754.50px;" width="26.00" height="24.00" viewBox="0 0 26 24" preserveAspectRatio="none"><rect x="7.6" y="0" width="4.2" height="19.4" transform="rotate(0 9.7 9.7)" fill="#333"/><rect x="7.6" y="0" width="4.2" height="19.4" transform="rotate(45 9.7 9.7)" fill="#333"/><rect x="7.6" y="0" width="4.2" height="19.4" transform="rotate(90 9.7 9.7)" fill="#333"/><rect x="7.6" y="0" width="4.2" height="19.4" transform="rotate(135 9.7 9.7)" fill="#333"/><circle cx="9.7" cy="9.7" r="6.9" fill="#333"/><circle cx="9.7" cy="9.7" r="3.1" fill="#c6c6c6"/><polygon points="19.3,13.5 26,13.5 22.6,19.5" fill="#333"/></svg>
<span class="t" style="left:884.00px;top:2783.95px;font-size:22px;color:#777;letter-spacing:-0.051px;">Shader</span>
<div style="left:979.80px;top:2789.20px;width:291.40px;height:28.30px;background:linear-gradient(#ececec,#dcdcdc);border:1.5px solid #a0a0a0;border-radius:7px;"></div>
<span class="t" style="left:991.50px;top:2783.90px;font-size:17.4px;color:#8a8a8a;letter-spacing:0.886px;">UI/Default</span>
<svg style="left:1250.80px;top:2801.00px;" width="10.00" height="6.00" viewBox="0 0 10 6" preserveAspectRatio="none"><polygon points="0,0 10,0 5,6" fill="#777"/></svg>
<div class="sep" style="left:776.00px;top:2839.00px;width:509.00px;height:1.60px;"></div>
<div class="btn" style="left:805.70px;top:2858.50px;width:448.80px;height:41.00px;border-radius:5px;"></div>
<span class="t" style="left:935.70px;top:2858.07px;font-size:23.4px;color:#111;letter-spacing:1.396px;">Add Component</span>
</div></div>
<div style="left:1284.50px;top:1272.00px;width:28.00px;height:663.50px;background:linear-gradient(to right,#dcdcdc,#c6c6c6 60%,#b6b6b6);border-left:1px solid #a0a0a0;"></div>
<svg style="left:1292.00px;top:1284.30px;" width="13.00" height="9.70" viewBox="0 0 14 10" preserveAspectRatio="none"><polygon points="7,0 14,10 0,10" fill="#444"/></svg>
<svg style="left:1292.00px;top:1913.50px;" width="13.00" height="9.70" viewBox="0 0 14 10" preserveAspectRatio="none"><polygon points="0,0 14,0 7,10" fill="#444"/></svg>
<div style="left:1286.50px;top:1303.50px;width:25.50px;height:596.50px;background:linear-gradient(to right,#adadad,#dedede 18%,#ebebeb 50%,#e6e6e6 80%,#cfcfcf);border-radius:12px;border-top:1px solid #9a9a9a;"></div>
<div style="left:1286.50px;top:1305.20px;width:24.50px;height:234.80px;background:linear-gradient(to right,#5b7094 0,#a3b3cb 14%,#899cbc 45%,#5f779d 100%);border-radius:12px;border:1px solid #4a6088;"></div>
<div class="tab" style="left:776.00px;top:1237.00px;width:170.00px;height:34.50px;"></div>
<svg style="left:794.00px;top:1243.10px;" width="20.40" height="20.40" viewBox="0 0 22 22" preserveAspectRatio="none"><circle cx="11" cy="11" r="10.5" fill="#3a3a3a"/><rect x="9.3" y="9" width="3.6" height="8" fill="#e8e8e8"/><rect x="8" y="9" width="3" height="2" fill="#e8e8e8"/><rect x="8" y="15.5" width="6.4" height="1.8" fill="#e8e8e8"/><circle cx="11" cy="5.6" r="2" fill="#e8e8e8"/></svg>
<span class="t" style="left:823.70px;top:1234.75px;font-size:21.5px;color:#3a3a3a;letter-spacing:0.920px;">Inspector</span>
<svg style="left:1250.30px;top:1244.30px;" width="15.00" height="18.50" viewBox="0 0 15 18.5" preserveAspectRatio="none"><path d="M2.6 4.6 Q5 -0.3 9.6 1.6 Q11.6 3 11.4 6 V9.5" fill="none" stroke="#555" stroke-width="1.7"/><rect x="0.5" y="8.7" width="13.4" height="9.3" fill="#4d4d4d"/></svg>
<svg style="left:1276.30px;top:1250.30px;" width="27.00" height="11.00" viewBox="0 0 27 11" preserveAspectRatio="none"><polygon points="0,2.6 9.2,2.6 4.6,8.2" fill="#4a4a4a"/><rect x="11.6" y="0.2" width="15.2" height="1.9" fill="#444"/><rect x="11.6" y="4.3" width="15.2" height="1.9" fill="#444"/><rect x="11.6" y="8.4" width="15.2" height="1.9" fill="#444"/></svg>
<div style="left:775.70px;top:1935.20px;width:538.00px;height:32.00px;background:linear-gradient(#727272,#5d5d5d 50%,#535353);border-top:1.2px solid #484848;border-bottom:1.2px solid #3a3a3a;"></div>
<div style="left:786.20px;top:1936.20px;width:1.50px;height:29.50px;background:#6e6e6e;"></div>
<span class="t" style="left:794.40px;top:1931.25px;font-size:21.5px;font-weight:bold;color:#fff;letter-spacing:0.924px;text-shadow:0 1px 1px #222;">2 Images</span>
<svg style="left:904.50px;top:1944.20px;" width="8.00" height="13.00" viewBox="0 0 8 14" preserveAspectRatio="none"><polygon points="4,0 8,5.5 0,5.5" fill="#bdbdbd"/><polygon points="0,8.5 8,8.5 4,14" fill="#bdbdbd"/></svg>
<div style="left:917.00px;top:1936.20px;width:1.50px;height:29.50px;background:#3e3e3e;"></div>
<div style="left:918.50px;top:1936.20px;width:1.50px;height:29.50px;background:#6c6c6c;"></div>
<div style="left:924.80px;top:1947.20px;width:373.50px;height:1.50px;background:#aaa;"></div>
<div style="left:924.80px;top:1948.70px;width:373.50px;height:1.00px;background:#3a3a3a;"></div>
<div style="left:924.80px;top:1951.70px;width:373.50px;height:1.50px;background:#aaa;"></div>
<div style="left:924.80px;top:1953.20px;width:373.50px;height:1.00px;background:#3a3a3a;"></div>
<div style="left:0.00px;top:1968.00px;width:1855.00px;height:31.00px;background:#a4a4a4;border-top:1.5px solid #8a8a8a;"></div>
<svg style="left:8.10px;top:1974.20px;" width="27.60" height="27.60" viewBox="0 0 28 28" preserveAspectRatio="none"><path d="M8.6 0.8 H19.4 L27.2 8.6 V19.4 L19.4 27.2 H8.6 L0.8 19.4 V8.6 Z" fill="#ec0c1c" stroke="#b00a14" stroke-width="1.4" stroke-linejoin="round"/><path d="M9 2 H19 L24 7 Q14 12 4 7 Z" fill="#ff5c66" opacity="0.5"/><rect x="12.2" y="5.8" width="3.6" height="11.4" fill="#fff"/><rect x="12.2" y="19.6" width="3.6" height="3.4" fill="#fff"/></svg>
<span class="t" style="left:42.00px;top:1968.75px;font-size:21.5px;color:#680606;letter-spacing:0.841px;">InvalidOperationException:</span>
<span class="t" style="left:329.50px;top:1968.75px;font-size:21.5px;color:#680606;letter-spacing:-0.181px;">The</span>
<span class="t" style="left:375.00px;top:1968.75px;font-size:21.5px;color:#680606;letter-spacing:1.043px;">operation</span>
<span class="t" style="left:483.00px;top:1968.75px;font-size:21.5px;color:#680606;letter-spacing:-2.331px;">is</span>
<span class="t" style="left:506.20px;top:1968.75px;font-size:21.5px;color:#680606;letter-spacing:1.305px;">not</span>
<span class="t" style="left:548.70px;top:1968.75px;font-size:21.5px;color:#680606;letter-spacing:0.630px;">possible</span>
<span class="t" style="left:641.20px;top:1968.75px;font-size:21.5px;color:#680606;letter-spacing:0.365px;">when</span>
<span class="t" style="left:703.70px;top:1968.75px;font-size:21.5px;color:#680606;letter-spacing:0.738px;">moved</span>
<span class="t" style="left:781.20px;top:1968.75px;font-size:21.5px;color:#680606;letter-spacing:0.220px;">past</span>
<span class="t" style="left:832.50px;top:1968.75px;font-size:21.5px;color:#680606;letter-spacing:-1.408px;">all</span>
<span class="t" style="left:862.00px;top:1968.75px;font-size:21.5px;color:#680606;letter-spacing:0.955px;">properties</span>
<span class="t" style="left:975.00px;top:1968.75px;font-size:21.5px;color:#680606;letter-spacing:0.581px;">(Next</span>
<span class="t" style="left:1037.50px;top:1968.75px;font-size:21.5px;color:#680606;letter-spacing:1.058px;">returned</span>
<span class="t" style="left:1133.70px;top:1968.75px;font-size:21.5px;color:#680606;letter-spacing:0.344px;">false)</span>
<span class="t" style="left:1559.90px;top:1968.60px;font-size:17.4px;color:#111;letter-spacing:0.816px;">Auto Generate Lighting On</span>
</div>
</body></html>
